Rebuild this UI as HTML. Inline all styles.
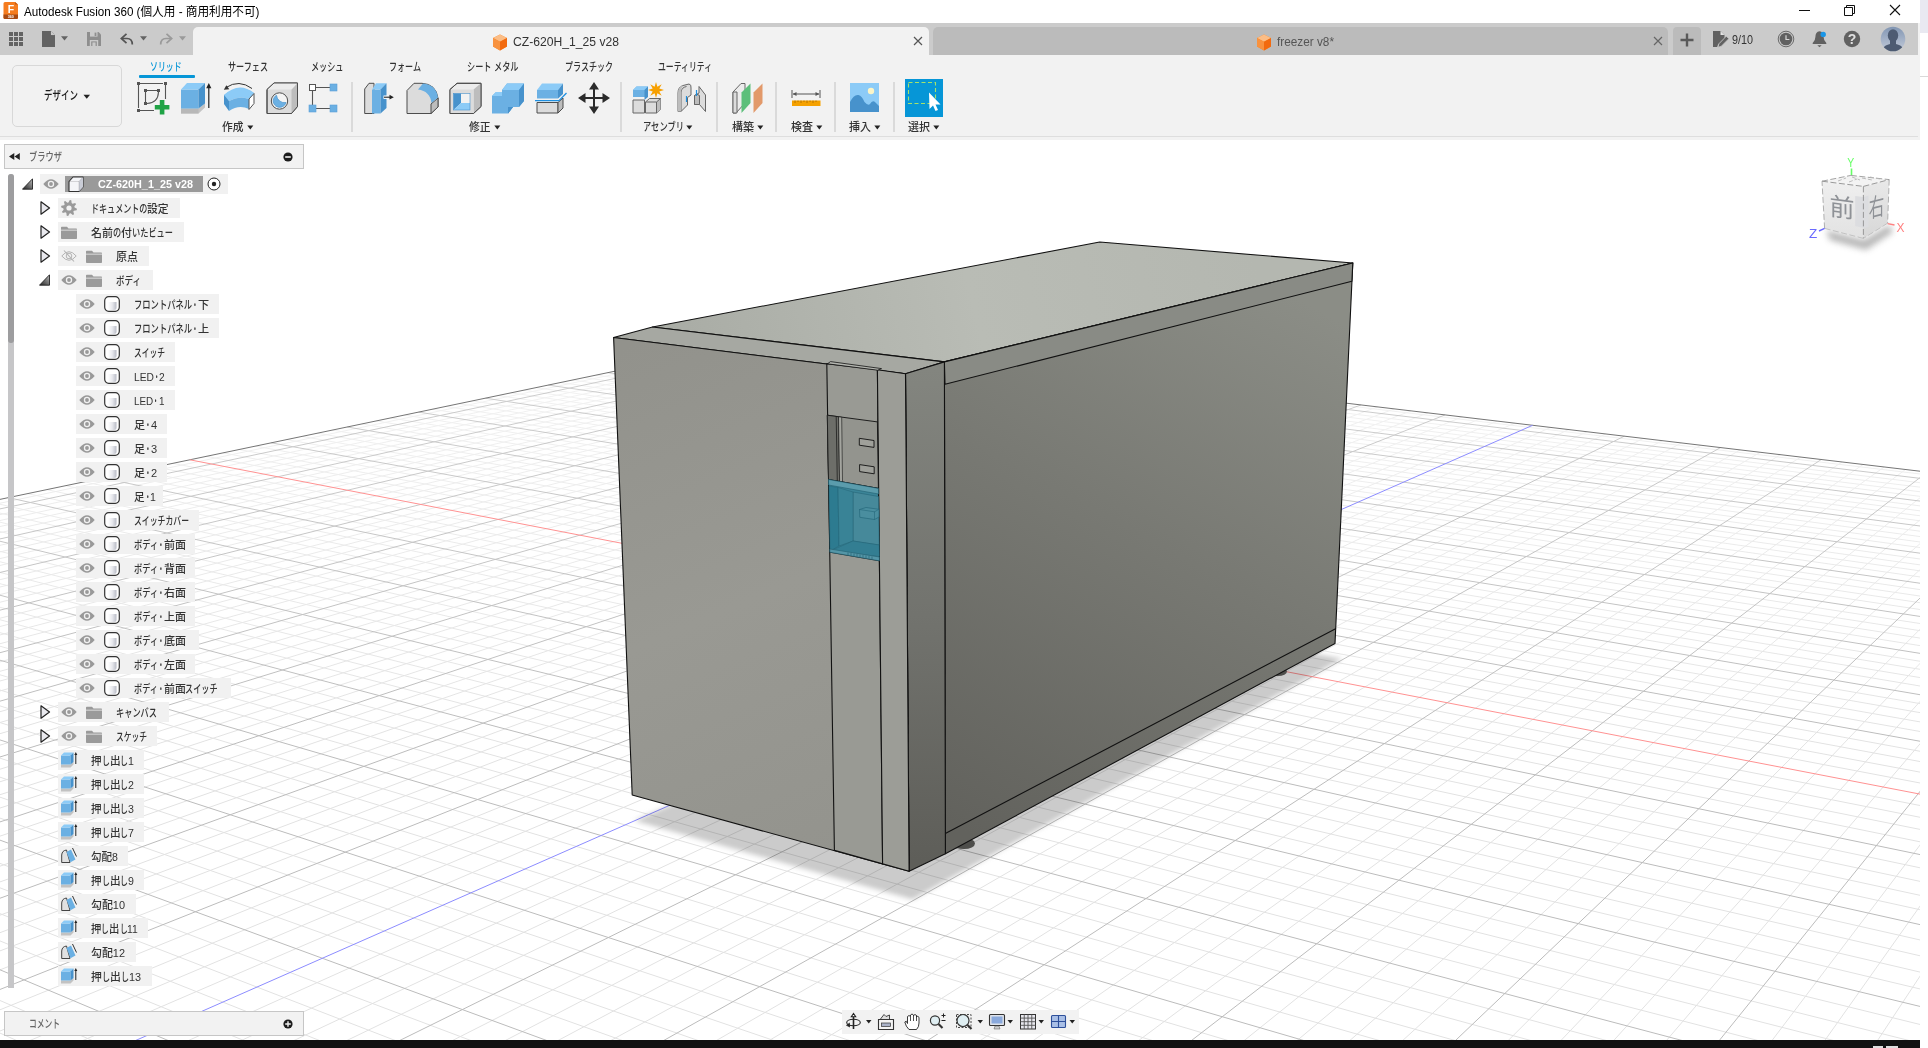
<!DOCTYPE html>
<html lang="ja"><head><meta charset="utf-8"><title>Autodesk Fusion 360</title><style>
html,body{margin:0;padding:0}
body{width:1928px;height:1048px;overflow:hidden;background:#fff;position:relative;font-family:"Liberation Sans","Noto Sans CJK JP",sans-serif;font-size:12px;color:#333}
.abs{position:absolute;display:block}
.t{position:absolute;white-space:pre;transform-origin:0 50%;line-height:18px;height:18px;display:inline-block}
.r{display:inline-block;transform-origin:0 50%;white-space:pre}
</style></head>
<body>
<svg width="0" height="0" style="position:absolute;left:0;top:0"><defs><linearGradient id="bdg" x1="0" y1="0" x2="1" y2="0"><stop offset="0" stop-color="#fff"/><stop offset=".5" stop-color="#e8e9ee"/><stop offset="1" stop-color="#b9bcc6"/></linearGradient><linearGradient id="trg" x1="0" y1="1" x2="1" y2="0"><stop offset="0" stop-color="#222"/><stop offset="1" stop-color="#bbb"/></linearGradient></defs></svg>
<div class="abs" style="left:0px;top:0px;width:1920px;height:23px;background:#fff;"></div>
<div class="abs" style="left:1920px;top:0px;width:8px;height:33px;background:#e9e9f1;"></div>
<div class="abs" style="left:1920px;top:76px;width:8px;height:1px;background:#d9d9d9;"></div>
<svg class="abs" style="left:3px;top:2px;" width="16" height="18" viewBox="0 0 16 18" ><path d="M2 0H12L15 2.5V15.5Q15 17 13.5 17H2Q.5 17 .5 15.5V1.5Q.5 0 2 0Z" fill="#f57c1f"/><path d="M.5 12.5H15V15.5Q15 17 13.5 17H2Q.5 17 .5 15.5Z" fill="#a84a12"/><path d="M12 0L15 2.5H12Z" fill="#c25a12"/><text x="8" y="11" font-size="10.5" font-family="Liberation Sans,sans-serif" font-weight="700" fill="#fff" text-anchor="middle">F</text><text x="7.8" y="16" font-size="3.6" font-family="Liberation Sans,sans-serif" font-weight="700" fill="#fff" text-anchor="middle">360</text></svg>
<span class="t" style="left:23.5px;top:2.5px;font-size:12.5px;font-weight:400;color:#000;transform:scaleX(0.9313)">Autodesk Fusion 360 (個人用 - 商用利用不可)</span>
<svg class="abs" style="left:1730px;top:0px;" width="190" height="23" viewBox="0 0 190 23" ><path d="M69 10.5H80" stroke="#111" stroke-width="1"/><path d="M114.500 7.500H122.500V15.500H114.500Z M116.500 7.500V5.500H124.500V13.500H122.500" fill="none" stroke="#111" stroke-width="1"/><path d="M160 5L170 15M170 5L160 15" stroke="#111" stroke-width="1.100"/></svg>
<div class="abs" style="left:0px;top:23px;width:1918px;height:32px;background:#cbcbcb;"></div>
<div class="abs" style="left:1918px;top:23px;width:2px;height:32px;background:#f2f2f2;"></div>
<div class="abs" style="left:193px;top:27px;width:736px;height:28px;background:#f2f2f2;border-radius:5px 5px 0 0"></div>
<div class="abs" style="left:933px;top:27px;width:735px;height:28px;background:#bbbbbb;border-radius:5px 5px 0 0"></div>
<div class="abs" style="left:1673px;top:27px;width:28px;height:28px;background:#bbbbbb;border-radius:4px 4px 0 0"></div>
<svg class="abs" style="left:0px;top:0px;" width="200" height="55" viewBox="0 0 200 55" ><g fill="#636363"><rect x="9" y="32" width="4" height="4"/><rect x="9" y="37" width="4" height="4"/><rect x="9" y="42" width="4" height="4"/><rect x="14" y="32" width="4" height="4"/><rect x="14" y="37" width="4" height="4"/><rect x="14" y="42" width="4" height="4"/><rect x="19" y="32" width="4" height="4"/><rect x="19" y="37" width="4" height="4"/><rect x="19" y="42" width="4" height="4"/></g><path d="M42 31H51L55 35V47H42Z" fill="#636363"/><path d="M51 31L55 35H51Z" fill="#cbcbcb"/><path d="M51.4 31.4V34.6H54.6" fill="none" stroke="#cbcbcb" stroke-width=".8"/><path d="M61 36.3H68L64.5 40.6Z" fill="#636363"/><path d="M87 32H98.5L101 34.5V46H87Z" fill="#8e8e8e"/><rect x="90" y="32" width="7.5" height="4.6" fill="#cbcbcb"/><rect x="94.6" y="32.6" width="1.8" height="3.4" fill="#8e8e8e"/><rect x="89.8" y="40" width="8.4" height="6" fill="#cbcbcb"/><rect x="91.2" y="41.4" width="5.6" height="4.6" fill="#8e8e8e"/><rect x="92.4" y="42.4" width="3.2" height="3.6" fill="#cbcbcb"/><path d="M121.5 38.5H127Q132.3 38.5 132.3 44.5" fill="none" stroke="#555" stroke-width="1.7"/><path d="M126.5 33.8L121.3 38.5L126.5 43.2" fill="none" stroke="#555" stroke-width="1.7"/><path d="M140 36.3H147L143.5 40.6Z" fill="#636363"/><path d="M171.5 38.5H166Q160.7 38.5 160.7 44.5" fill="none" stroke="#9a9a9a" stroke-width="1.7"/><path d="M166.5 33.8L171.7 38.5L166.5 43.2" fill="none" stroke="#9a9a9a" stroke-width="1.7"/><path d="M179 36.3H186L182.5 40.6Z" fill="#9a9a9a"/></svg>
<svg class="abs" style="left:492px;top:33.5px;" width="16" height="17" viewBox="0 0 16 17" ><path d="M8 .5L15 4V12.5L8 16.5L1 12.5V4Z" fill="#f58220"/><path d="M8 .5L15 4L8 7.8L1 4Z" fill="#fbbd86"/><path d="M8 7.8L15 4V12.5L8 16.5Z" fill="#f26a0f"/><path d="M8 7.8V16.5L1 12.5V4Z" fill="#f8923f"/></svg>
<span class="t" style="left:512.5px;top:32.5px;font-size:12.5px;font-weight:500;color:#333;transform:scaleX(0.9715)">CZ-620H_1_25 v28</span>
<svg class="abs" style="left:913px;top:36px;" width="10" height="10" viewBox="0 0 10 10" ><path d="M1 1L9 9M9 1L1 9" stroke="#555" stroke-width="1.2"/></svg>
<svg class="abs" style="left:1256px;top:33.5px;" width="16" height="17" viewBox="0 0 16 17" ><path d="M8 .5L15 4V12.5L8 16.5L1 12.5V4Z" fill="#f58220"/><path d="M8 .5L15 4L8 7.8L1 4Z" fill="#fbbd86"/><path d="M8 7.8L15 4V12.5L8 16.5Z" fill="#f26a0f"/><path d="M8 7.8V16.5L1 12.5V4Z" fill="#f8923f"/></svg>
<span class="t" style="left:1277px;top:32.5px;font-size:12.5px;font-weight:500;color:#555;transform:scaleX(0.9429)">freezer v8*</span>
<svg class="abs" style="left:1653px;top:36px;" width="10" height="10" viewBox="0 0 10 10" ><path d="M1 1L9 9M9 1L1 9" stroke="#666" stroke-width="1.2"/></svg>
<svg class="abs" style="left:1680px;top:33px;" width="14" height="14" viewBox="0 0 14 14" ><path d="M7 0.5V13.5M0.5 7H13.5" stroke="#5a5a5a" stroke-width="2.4"/></svg>
<svg class="abs" style="left:1712px;top:30px;" width="18" height="18" viewBox="0 0 18 18" ><path d="M1 1H8.500L12.500 5V8L6 14.500L5.200 17H1Z" fill="#616161"/><path d="M8.500 1V5H12.500Z" fill="#e4e4e4"/><path d="M14.300 6.200L16.800 8.700L9.300 16.200L6.200 17.200L6.900 13.800Z" fill="#616161" stroke="#cbcbcb" stroke-width=".7"/></svg>
<span class="t" style="left:1732px;top:30.5px;font-size:12px;font-weight:400;color:#333;transform:scaleX(0.8990)">9/10</span>
<svg class="abs" style="left:1776px;top:29px;" width="20" height="20" viewBox="0 0 20 20" ><circle cx="10" cy="10" r="7.800" fill="none" stroke="#616161" stroke-width=".9"/><circle cx="10" cy="10" r="6.300" fill="#616161"/><path d="M10 6.200V10.500H13.400" fill="none" stroke="#d8d8d8" stroke-width="1.200"/></svg>
<svg class="abs" style="left:1810px;top:29px;" width="20" height="20" viewBox="0 0 20 20" ><path d="M9.500 2.300Q13.600 2.800 13.600 8Q13.600 11.500 16.300 14V15H2.700V14Q5.400 11.500 5.400 8Q5.400 2.800 9.500 2.300Z" fill="#616161"/><path d="M7.300 16.200H11.700L9.500 18.300Z" fill="#616161"/><circle cx="13.200" cy="5.400" r="2.700" fill="#1a96e8"/></svg>
<svg class="abs" style="left:1842px;top:29px;" width="20" height="20" viewBox="0 0 20 20" ><circle cx="10" cy="10" r="8.200" fill="#616161"/><text x="10" y="15" font-size="14" font-weight="700" text-anchor="middle" fill="#e0e0e0" font-family="Liberation Sans,sans-serif">?</text></svg>
<svg class="abs" style="left:1880px;top:26px;" width="26" height="26" viewBox="0 0 26 26" ><defs><clipPath id="avc"><circle cx="13" cy="13" r="12.300"/></clipPath><linearGradient id="avg" x1="0" y1="0" x2="0" y2="1"><stop offset="0" stop-color="#8296b3"/><stop offset="1" stop-color="#c3cbd9"/></linearGradient></defs><circle cx="13" cy="13" r="12.300" fill="url(#avg)"/><g clip-path="url(#avc)" fill="#4d5b72"><ellipse cx="13" cy="9.500" rx="5.200" ry="6.300"/><path d="M10 14H16V18Q21 19 23 22V27H3V22Q5 19 10 18Z"/></g></svg>
<div class="abs" style="left:0px;top:55px;width:1920px;height:85px;background:#f2f2f2;"></div>
<div class="abs" style="left:0px;top:136px;width:1918px;height:1px;background:#dedede;"></div>
<div class="abs" style="left:11.5px;top:65px;width:108px;height:60px;border:1.5px solid #d8d8d8;border-radius:5px;box-sizing:content-box"></div>
<span class="t" style="left:44px;top:86.5px;font-size:12px;font-weight:500;color:#1a1a1a;transform:scaleX(0.7081)">デザイン</span>
<svg class="abs" style="left:82.5px;top:93.5px;" width="8" height="6" viewBox="0 0 8 6" ><path d="M.5 .8H7L3.75 4.8Z" fill="#222"/></svg>
<span class="t" style="left:149.5px;top:58px;font-size:11.5px;font-weight:500;color:#0696d7;transform:scaleX(0.6848)">ソリッド</span>
<span class="t" style="left:227.5px;top:58px;font-size:11.5px;font-weight:500;color:#333;transform:scaleX(0.7041)">サーフェス</span>
<span class="t" style="left:310.5px;top:58px;font-size:11.5px;font-weight:500;color:#333;transform:scaleX(0.7065)">メッシュ</span>
<span class="t" style="left:389px;top:58px;font-size:11.5px;font-weight:500;color:#333;transform:scaleX(0.7009)">フォーム</span>
<span class="t" style="left:466.5px;top:58px;font-size:11.5px;font-weight:500;color:#333"><span class="r" style="transform:scaleX(0.7096);margin-right:-10.02px">シート</span><span class="r" style="transform:scaleX(0.9494);margin-right:-0.16px"> </span><span class="r" style="transform:scaleX(0.7096);margin-right:-10.02px">メタル</span></span>
<span class="t" style="left:564.5px;top:58px;font-size:11.5px;font-weight:500;color:#333;transform:scaleX(0.6979)">プラスチック</span>
<span class="t" style="left:658px;top:58px;font-size:11.5px;font-weight:500;color:#333;transform:scaleX(0.6825)">ユーティリティ</span>
<div class="abs" style="left:138.5px;top:75px;width:56px;height:3px;background:#0696d7;border-radius:1px"></div>
<div class="abs" style="left:350.5px;top:82px;width:2px;height:50px;background:#dadada;"></div>
<div class="abs" style="left:619.5px;top:82px;width:2px;height:50px;background:#dadada;"></div>
<div class="abs" style="left:716.0px;top:82px;width:2px;height:50px;background:#dadada;"></div>
<div class="abs" style="left:775.0px;top:82px;width:2px;height:50px;background:#dadada;"></div>
<div class="abs" style="left:834.0px;top:82px;width:2px;height:50px;background:#dadada;"></div>
<div class="abs" style="left:893.0px;top:82px;width:2px;height:50px;background:#dadada;"></div>
<svg class="abs" style="left:137px;top:82px;overflow:visible" width="32" height="32" viewBox="0 0 32 32" ><g fill="none" stroke="#555" stroke-width="1.1"><path d="M3 1.5H26M1.5 3V26M28.5 3V17M3 28.5H17"/><path d="M9 8.5H20M8.5 9V20M21.5 10Q21 21 10 21.5"/></g><g fill="#555"><rect x="0" y="0" width="3" height="3"/><rect x="27" y="0" width="3" height="3"/><rect x="0" y="27" width="3" height="3"/><rect x="7" y="7" width="3" height="3"/><rect x="20" y="7" width="3" height="3"/><rect x="7" y="20" width="3" height="3"/></g><path d="M22.8 18h4.6v5h5v4.6h-5v5h-4.6v-5h-5v-4.6h5z" fill="#1fa345"/></svg>
<svg class="abs" style="left:181px;top:82px;overflow:visible" width="32" height="32" viewBox="0 0 32 32" ><path d="M0 26.5L17.5 26.5L24 21.5V25.5L17.5 31.5H0Z" fill="#c4c4c4"/><path d="M0 26.5H17.5V31.5H0Z" fill="#b8b8b8"/><path d="M0 7.5H17.5V26.5H0Z" fill="#6bb0e3"/><path d="M0 7.5L6 1H24L17.5 7.5Z" fill="#8ccbf7"/><path d="M17.5 7.5L24 1V21.5L17.5 26.5Z" fill="#4792cc"/><path d="M27.8 26V5" stroke="#222" stroke-width="1.2" fill="none"/><path d="M27.8 1L25.2 6.2H30.4Z" fill="#222"/></svg>
<svg class="abs" style="left:222.5px;top:83px;overflow:visible" width="32" height="30" viewBox="0 0 32 30" ><path d="M1 12Q16 -2 31 10V18Q16 6 1 20Z" fill="#8ccbf7"/><path d="M1 12Q9 6 16 5.5Q24 5 31 10L26 16Q16 12 6 18Z" fill="#8ccbf7"/><path d="M6 18Q16 12 26 16V26Q16 21 6 28Z" fill="#6bb0e3"/><path d="M1 12L6 18V28L1 21Z" fill="#4792cc"/><path d="M26 16L31 10.5V20.5L26 26.5Z" fill="#fff" stroke="#555" stroke-width="1"/><path d="M3 4.5Q16 -4 29 5.5" stroke="#333" stroke-width="1" fill="none"/><path d="M0.8 6.8L6.3 6.2L3.4 2.2Z" fill="#333"/></svg>
<svg class="abs" style="left:265.5px;top:82px;overflow:visible" width="32" height="32" viewBox="0 0 32 32" ><path d="M1 7.5L8 1H31.5V24.5L25.5 31.5H1Z" fill="#dcdcdc" stroke="#4d4d4d" stroke-width="1" stroke-linejoin="round"/><path d="M25.5 7.5L31.5 1V24.5L25.5 31.5Z" fill="#bdbdbd"/><path d="M1 7.5L8 1H31.5L25.5 7.5Z" fill="#ececec"/><path d="M1 7.5L8 1H31.5V24.5L25.5 31.5H1Z" fill="none" stroke="#4d4d4d" stroke-width="1" stroke-linejoin="round"/><circle cx="13.5" cy="19" r="8.2" fill="#f4f4f4" stroke="#4d4d4d" stroke-width="1"/><path d="M10.5 13.2A6.5 6.5 0 1 0 20 20.5A8 8 0 0 1 10.5 13.2Z" fill="#6bb0e3" stroke="#4792cc" stroke-width=".7"/></svg>
<svg class="abs" style="left:309px;top:84px;overflow:visible" width="28" height="28" viewBox="0 0 28 28" ><path d="M3.5 6V24M6 3.5H22M6 24.5H22" stroke="#555" stroke-width="1.1" fill="none"/><rect x=".5" y=".5" width="6" height="6" fill="#fff" stroke="#555" stroke-width="1"/><rect x="21" y="0" width="7" height="7" fill="#6bb0e3" stroke="#5a9fd6" stroke-width=".6"/><rect x="0" y="21" width="7" height="7" fill="#6bb0e3" stroke="#5a9fd6" stroke-width=".6"/><rect x="21" y="21" width="7" height="7" fill="#6bb0e3" stroke="#5a9fd6" stroke-width=".6"/></svg>
<svg class="abs" style="left:363.5px;top:82px;overflow:visible" width="32" height="32" viewBox="0 0 32 32" ><path d="M.7 7L5 1.3H10V31.5H.7Z" fill="#dcdcdc" stroke="#4d4d4d" stroke-width="1" stroke-linejoin="round"/><path d="M8 7.5H16.5V31.5H8Z" fill="#6bb0e3"/><path d="M8 7.5L12 1.3H22.5L16.5 7.5Z" fill="#8ccbf7"/><path d="M16.5 7.5L22.5 1.3V26L16.5 31.5Z" fill="#4792cc"/><rect x="19.5" y="13.5" width="4" height="3.4" fill="#fff"/><path d="M20 15.2H27" stroke="#222" stroke-width="1.1"/><path d="M29.8 15.2L25.5 12.8V17.6Z" fill="#222"/></svg>
<svg class="abs" style="left:405.5px;top:82px;overflow:visible" width="33" height="32" viewBox="0 0 33 32" ><path d="M1 8.5L8 1.3H16Q30 2 32 16V25L25 31.5H1Z" fill="#dcdcdc" stroke="#4d4d4d" stroke-width="1" stroke-linejoin="round"/><path d="M25 31.5V22L32 16V25Z" fill="#bdbdbd" stroke="#4d4d4d" stroke-width="1" stroke-linejoin="round"/><path d="M12 7.5L17 1.5Q30 2.5 32 15.5L25.5 21Q24 9 12 7.5Z" fill="#6bb0e3"/></svg>
<svg class="abs" style="left:448.5px;top:82px;overflow:visible" width="33" height="32" viewBox="0 0 33 32" ><path d="M1 7.5L8 1.3H32V24.5L24.5 31.5H1Z" fill="#ececec" stroke="#4d4d4d" stroke-width="1" stroke-linejoin="round"/><path d="M24.5 7.5L32 1.3V24.5L24.5 31.5Z" fill="#bdbdbd"/><path d="M1 7.5H24.5V31.5H1Z" fill="#dcdcdc"/><path d="M1 7.5L8 1.3H32V24.5L24.5 31.5H1Z" fill="none" stroke="#4d4d4d" stroke-width="1" stroke-linejoin="round"/><rect x="4.5" y="11.5" width="16.5" height="16.5" fill="#f2f2f2"/><path d="M4.5 11.5H12V21L4.5 28Z" fill="#4792cc"/><path d="M4.5 28L12 21H21V28Z" fill="#8ccbf7"/><rect x="4.5" y="11.5" width="16.5" height="16.5" fill="none" stroke="#4792cc" stroke-width=".6"/></svg>
<svg class="abs" style="left:491.5px;top:82px;overflow:visible" width="32" height="32" viewBox="0 0 32 32" ><path d="M10 8L15 1.5H32V19L27 25H21L16 31.5H0V14L4 10H10Z" fill="#6bb0e3"/><path d="M10 8L15 1.5H32L27 8Z" fill="#8ccbf7"/><path d="M0 14L4 10H10V14Z" fill="#8ccbf7"/><path d="M27 8L32 1.5V19L27 25Z" fill="#4792cc"/><path d="M21 25H16V31.5L21 25Z" fill="#4792cc"/><path d="M16 25H21L16 31.5Z" fill="#4792cc"/></svg>
<svg class="abs" style="left:535px;top:82px;overflow:visible" width="32" height="32" viewBox="0 0 32 32" ><path d="M2 8L7 1.5H28L23 8Z" fill="#8ccbf7"/><path d="M2 8H23V16.5H2Z" fill="#6bb0e3"/><path d="M23 8L28 1.5V12L23 16.5Z" fill="#4792cc"/><path d="M2 20.5H23V31H2Z" fill="#dcdcdc" stroke="#4d4d4d" stroke-width="1"/><path d="M23 20.5L28 16V26L23 31Z" fill="#bdbdbd" stroke="#4d4d4d" stroke-width="1" stroke-linejoin="round"/><path d="M0 18.7H24L31.5 11" stroke="#1e8fe0" stroke-width="1.3" fill="none"/></svg>
<svg class="abs" style="left:578px;top:82px;overflow:visible" width="32" height="32" viewBox="0 0 32 32" ><path d="M16 3V29M3 16H29" stroke="#2b2b2b" stroke-width="2"/><path d="M16 0L11 7.5H21ZM16 32L11 24.5H21ZM0 16L7.5 11V21ZM32 16L24.5 11V21Z" fill="#2b2b2b"/></svg>
<svg class="abs" style="left:631.5px;top:82px;overflow:visible" width="32" height="32" viewBox="0 0 32 32" ><path d="M1 8L4.5 4.5H16V15H1Z" fill="#6bb0e3"/><path d="M1 8L4.5 4.5H16L12.5 8Z" fill="#8ccbf7"/><path d="M12.5 8L16 4.5V15L12.5 18Z" fill="#4792cc"/><path d="M1 18H12.5V31H1Z" fill="#dcdcdc" stroke="#666" stroke-width="1"/><path d="M13.5 20L17.5 16.5H28.5V27.5L24.5 31H13.5Z" fill="#dcdcdc" stroke="#666" stroke-width="1" stroke-linejoin="round"/><path d="M24.5 20L28.5 16.5V27.5L24.5 31Z" fill="#bdbdbd"/><path d="M13.5 20H24.5V31M24.5 20L28.5 16.5" fill="none" stroke="#666" stroke-width="1"/><path d="M24.0 0.0L25.4 4.7L29.7 2.3L27.3 6.6L32.0 8.0L27.3 9.4L29.7 13.7L25.4 11.3L24.0 16.0L22.6 11.3L18.3 13.7L20.7 9.4L16.0 8.0L20.7 6.6L18.3 2.3L22.6 4.7Z" fill="#f7a000"/></svg>
<svg class="abs" style="left:676.5px;top:83px;overflow:visible" width="29" height="29" viewBox="0 0 29 29" ><path d="M1 10Q1 4 6 2.5L12 1Q14.5 1.5 14 5V12L10.5 14.5V22L4 28.5H1Z" fill="#dcdcdc" stroke="#666" stroke-width="1" stroke-linejoin="round"/><path d="M4 28.5V9Q4.5 4.5 9.5 3.5" fill="none" stroke="#666" stroke-width="1"/><path d="M1 10Q1 4 6 2.5Q4 5 4 9V28.5H1Z" fill="#bdbdbd"/><path d="M22 3.5L28.5 12V28.5L22.5 21.5H17.5V12.5L22 10Z" fill="#dcdcdc" stroke="#666" stroke-width="1" stroke-linejoin="round"/><path d="M17.5 12.5Q20 10 22.5 12.5V21.5H17.5Z" fill="#bdbdbd" stroke="#666" stroke-width="1"/><path d="M9.5 13V19M19.5 7V13" stroke="#1e8fe0" stroke-width="1.2"/></svg>
<svg class="abs" style="left:731.5px;top:82px;overflow:visible" width="31" height="32" viewBox="0 0 31 32" ><path d="M1 10L9 1.5H13V21L4 31H1Z" fill="#ececec" stroke="#666" stroke-width="1" stroke-linejoin="round"/><path d="M1 10H5V31H1Z" fill="#dcdcdc" stroke="#666" stroke-width="1"/><path d="M9.5 10.5L18.5 1.5V21L9.5 31Z" fill="#5cbf7a"/><path d="M21.5 10.5L30.5 1.5V21L21.5 31Z" fill="#e2996a"/></svg>
<svg class="abs" style="left:791.5px;top:90px;overflow:visible" width="29" height="16" viewBox="0 0 29 16" ><path d="M0 0V8M28 0V8M1 4H27" stroke="#555" stroke-width="1" fill="none"/><path d="M0.8 4L4.5 2V6ZM27.2 4L23.5 2V6Z" fill="#555"/><rect x="0" y="10.5" width="28.5" height="5.5" fill="#f5a100"/><path d="M3 10.5V13M6 10.5V12M9 10.5V13M12 10.5V12M15 10.5V13M18 10.5V12M21 10.5V13M24 10.5V12" stroke="#a86a00" stroke-width=".8"/></svg>
<svg class="abs" style="left:850px;top:83px;overflow:visible" width="29" height="29" viewBox="0 0 29 29" ><rect x="0" y="0" width="29" height="29" fill="#8ccbf7"/><path d="M0 19Q4 11 8.5 12Q12 13 14.5 19Q18 23 20 21Q22.5 16.5 25.5 19.5L29 23V29H0Z" fill="#4792cc"/><circle cx="21" cy="8" r="3.2" fill="#fbf5c8"/></svg>
<svg class="abs" style="left:905px;top:79px;overflow:visible" width="38" height="38" viewBox="0 0 38 38" ><rect width="38" height="38" fill="#0696d7"/><rect x="3.5" y="3.5" width="27" height="21" fill="none" stroke="#a6e36a" stroke-width="1.1" stroke-dasharray="4 2.5"/><path d="M24 13.5L24.5 30L28 26.5L30.5 32L33 31L30.5 25.5H35.5Z" fill="#fff"/></svg>
<span class="t" style="left:221.5px;top:118px;font-size:11.5px;font-weight:500;color:#333;transform:scaleX(0.9348)">作成</span>
<svg class="abs" style="left:246.5px;top:125px;" width="7" height="5" viewBox="0 0 7 5" ><path d="M.3 .5H6.3L3.3 4.5Z" fill="#222"/></svg>
<span class="t" style="left:468.5px;top:118px;font-size:11.5px;font-weight:500;color:#333;transform:scaleX(0.9348)">修正</span>
<svg class="abs" style="left:493.5px;top:125px;" width="7" height="5" viewBox="0 0 7 5" ><path d="M.3 .5H6.3L3.3 4.5Z" fill="#222"/></svg>
<span class="t" style="left:642.5px;top:118px;font-size:11.5px;font-weight:500;color:#333;transform:scaleX(0.7201)">アセンブリ</span>
<svg class="abs" style="left:686px;top:125px;" width="7" height="5" viewBox="0 0 7 5" ><path d="M.3 .5H6.3L3.3 4.5Z" fill="#222"/></svg>
<span class="t" style="left:732px;top:118px;font-size:11.5px;font-weight:500;color:#333;transform:scaleX(0.9565)">構築</span>
<svg class="abs" style="left:757px;top:125px;" width="7" height="5" viewBox="0 0 7 5" ><path d="M.3 .5H6.3L3.3 4.5Z" fill="#222"/></svg>
<span class="t" style="left:790.5px;top:118px;font-size:11.5px;font-weight:500;color:#333;transform:scaleX(0.9565)">検査</span>
<svg class="abs" style="left:815.5px;top:125px;" width="7" height="5" viewBox="0 0 7 5" ><path d="M.3 .5H6.3L3.3 4.5Z" fill="#222"/></svg>
<span class="t" style="left:849px;top:118px;font-size:11.5px;font-weight:500;color:#333;transform:scaleX(0.9565)">挿入</span>
<svg class="abs" style="left:874px;top:125px;" width="7" height="5" viewBox="0 0 7 5" ><path d="M.3 .5H6.3L3.3 4.5Z" fill="#222"/></svg>
<span class="t" style="left:908px;top:118px;font-size:11.5px;font-weight:500;color:#333;transform:scaleX(0.9565)">選択</span>
<svg class="abs" style="left:932.5px;top:125px;" width="7" height="5" viewBox="0 0 7 5" ><path d="M.3 .5H6.3L3.3 4.5Z" fill="#222"/></svg>
<div class="abs" style="left:0;top:140px;width:1920px;height:900px;overflow:hidden;background:#fff"><svg style="position:absolute;left:0;top:0" width="1920" height="900" viewBox="0 140 1920 900"><defs><linearGradient id="fade" gradientUnits="userSpaceOnUse" x1="0" y1="330" x2="0" y2="760"><stop offset="0" stop-color="#606060"/><stop offset="1" stop-color="#fff"/></linearGradient><linearGradient id="fade2" gradientUnits="userSpaceOnUse" x1="0" y1="330" x2="0" y2="760"><stop offset="0" stop-color="#b0b0b0"/><stop offset="1" stop-color="#fff"/></linearGradient><mask id="mk1" maskUnits="userSpaceOnUse" x="0" y="140" width="1920" height="900"><rect x="0" y="140" width="1920" height="900" fill="url(#fade)"/></mask><mask id="mk2" maskUnits="userSpaceOnUse" x="0" y="140" width="1920" height="900"><rect x="0" y="140" width="1920" height="900" fill="url(#fade2)"/></mask></defs>
<path d="M790.5 337.3L-912.2 694.7M814.3 340.1L-890.4 705.5M826.3 341.5L-879.2 711.0M838.4 343.0L-867.9 716.5M850.6 344.4L-856.4 722.2M875.3 347.3L-833.0 733.8M887.8 348.8L-821.0 739.7M900.4 350.3L-808.8 745.7M913.1 351.8L-796.4 751.8M938.8 354.9L-771.1 764.3M951.8 356.4L-758.1 770.7M964.8 358.0L-744.9 777.2M978.0 359.5L-731.5 783.8M1004.7 362.7L-704.1 797.3M1018.2 364.3L-690.1 804.2M1031.8 365.9L-675.8 811.2M1045.5 367.5L-661.2 818.4M1073.3 370.8L-631.4 833.1M1087.3 372.5L-616.1 840.6M1101.5 374.2L-600.6 848.3M1115.8 375.9L-584.8 856.1M1144.7 379.3L-552.3 872.1M1159.3 381.0L-535.6 880.3M1174.1 382.8L-518.6 888.7M1188.9 384.5L-501.3 897.2M1219.1 388.1L-465.7 914.8M1234.3 389.9L-447.4 923.8M1249.7 391.7L-428.8 933.0M1265.2 393.6L-409.8 942.3M1296.6 397.3L-370.7 961.6M1312.6 399.2L-350.5 971.5M1328.6 401.1L-330.0 981.7M1344.8 403.0L-309.1 992.0M1377.6 406.9L-265.9 1013.3M1394.2 408.9L-243.6 1024.2M1411.0 410.9L-220.8 1035.4M1427.9 412.9L-197.6 1046.9M1462.2 416.9L-149.7 1070.5M1479.6 419.0L-124.9 1082.7M1497.1 421.1L-99.6 1095.2M1514.8 423.2L-73.7 1108.0M1550.6 427.4L-20.1 1134.4M1568.8 429.6L7.6 1148.0M1587.1 431.7L35.9 1162.0M1605.7 433.9L65.0 1176.3M1643.2 438.4L125.2 1206.0M1662.3 440.7L156.4 1221.4M1681.5 442.9L188.4 1237.1M1700.9 445.2L221.2 1253.3M1740.2 449.9L289.3 1286.9M1760.2 452.3L324.7 1304.3M1780.4 454.7L361.1 1322.3M1800.7 457.1L398.4 1340.7M1842.0 462.0L476.2 1379.0M1863.0 464.5L516.8 1399.0M1884.1 467.0L558.4 1419.5M1905.5 469.5L601.3 1440.7M1948.9 474.6L691.0 1484.8M1971.0 477.3L737.8 1507.9M1993.2 479.9L786.1 1531.7M2015.7 482.6L835.9 1556.3M2061.4 488.0L940.3 1607.7M2084.5 490.7L995.1 1634.7M2108.0 493.5L1051.6 1662.6M2131.6 496.3L1110.1 1691.4M2179.7 502.0L1233.3 1752.1M2204.2 504.9L1298.1 1784.1M2228.9 507.8L1365.3 1817.2M2253.8 510.8L1435.0 1851.5M2304.6 516.8L1582.4 1924.2M2330.3 519.9L1660.5 1962.6M2356.4 523.0L1741.6 2002.6M2382.8 526.1L1826.1 2044.3M2436.4 532.4L2005.7 2132.8M2463.6 535.7L2101.4 2179.9M2491.2 538.9L2201.3 2229.2M2519.1 542.3L2305.7 2280.7M776.0 337.6L2547.0 548.7M756.5 341.7L2546.3 558.6M746.6 343.7L2545.9 563.7M736.6 345.8L2545.5 568.9M726.5 347.9L2545.1 574.1M706.0 352.2L2544.3 584.9M695.5 354.4L2543.9 590.5M685.0 356.6L2543.5 596.1M674.3 358.8L2543.1 601.8M652.5 363.3L2542.2 613.6M641.5 365.6L2541.8 619.7M630.3 368.0L2541.3 625.8M619.0 370.3L2540.9 632.1M596.0 375.1L2539.9 645.1M584.3 377.6L2539.4 651.7M572.4 380.0L2538.9 658.5M560.5 382.5L2538.4 665.4M536.1 387.6L2537.3 679.7M523.6 390.2L2536.8 687.0M511.1 392.8L2536.2 694.5M498.3 395.5L2535.7 702.2M472.4 400.9L2534.5 718.0M459.2 403.6L2533.9 726.1M445.8 406.4L2533.3 734.5M432.3 409.2L2532.7 743.0M404.7 415.0L2531.4 760.6M390.6 417.9L2530.7 769.7M376.4 420.9L2530.0 779.0M361.9 423.9L2529.3 788.5M332.5 430.1L2527.8 808.3M317.5 433.2L2527.1 818.5M302.3 436.4L2526.3 828.9M286.8 439.6L2525.5 839.7M255.4 446.1L2523.9 862.0M239.3 449.5L2523.0 873.5M223.0 452.9L2522.1 885.4M206.5 456.3L2521.2 897.6M172.8 463.3L2519.4 922.9M155.5 466.9L2518.4 936.1M138.1 470.6L2517.4 949.7M120.4 474.3L2516.4 963.6M84.1 481.8L2514.2 992.7M65.6 485.7L2513.1 1007.9M46.8 489.6L2511.9 1023.5M27.8 493.6L2510.7 1039.6M-11.3 501.7L2508.2 1073.4M-31.2 505.9L2506.9 1091.1M-51.5 510.1L2505.6 1109.3M-72.1 514.4L2504.2 1128.1M-114.2 523.2L2501.3 1167.7M-135.8 527.7L2499.7 1188.6M-157.7 532.2L2498.1 1210.1M-180.0 536.9L2496.5 1232.4M-225.6 546.4L2493.0 1279.6M-249.0 551.3L2491.2 1304.5M-272.8 556.2L2489.2 1330.3M-297.0 561.3L2487.3 1357.2M-346.6 571.6L2483.0 1414.2M-372.0 576.9L2480.8 1444.5M-397.9 582.3L2478.5 1476.0M-424.3 587.8L2476.0 1509.0M-478.4 599.1L2470.8 1579.4M-506.2 604.9L2468.0 1617.0M-534.6 610.8L2465.1 1656.4M-563.4 616.8L2462.1 1697.8M-622.7 629.2L2455.5 1786.9M-653.2 635.5L2451.9 1834.9M-684.2 642.0L2448.2 1885.6M-715.9 648.6L2444.2 1939.0M-781.1 662.2L2435.6 2055.4M-814.7 669.2L2430.9 2118.8M-849.0 676.3L2426.0 2186.2M-884.0 683.6L2420.7 2258.0" stroke="#e2e2e2" stroke-width="1" fill="none" mask="url(#mk1)"/>
<path d="M802.3 338.7L-901.3 700.1M862.9 345.9L-844.8 727.9M925.9 353.3L-783.8 758.0M991.3 361.1L-717.9 790.5M1059.4 369.2L-646.5 825.7M1130.2 377.6L-568.7 864.0M1203.9 386.3L-483.7 905.9M1280.9 395.4L-390.4 951.9M1361.1 404.9L-287.7 1002.5M1445.0 414.9L-173.9 1058.6M1624.3 436.2L94.7 1191.0M1720.5 447.6L254.8 1269.9M1821.3 459.5L436.8 1359.6M1927.1 472.1L645.5 1462.4M2038.4 485.3L887.3 1581.6M2155.6 499.2L1170.6 1721.2M2279.1 513.8L1507.3 1887.2M2409.4 529.3L1914.0 2087.6M2547.3 545.6L2415.0 2334.5M766.3 339.6L2546.7 553.7M716.3 350.0L2544.7 579.5M663.5 361.1L2542.7 607.7M607.6 372.7L2540.4 638.5M548.3 385.1L2537.9 672.5M485.5 398.2L2535.1 710.0M418.6 412.1L2532.0 751.7M347.3 427.0L2528.6 798.3M271.2 442.8L2524.7 850.7M102.4 478.0L2515.3 977.9M8.4 497.6L2509.5 1056.3M-93.0 518.7L2502.7 1147.6M-202.6 541.6L2494.8 1255.6M-321.6 566.4L2485.2 1385.1M-451.1 593.4L2473.5 1543.4M-592.8 622.9L2458.9 1741.2M-748.2 655.3L2440.1 1995.5M-919.6 691.1L2415.0 2334.5" stroke="#bcbcbc" stroke-width="1" fill="none" mask="url(#mk2)"/>
<path d="M-919.6 691.1L782.2 336.3L2547.3 545.6" stroke="#757575" stroke-width="1" fill="none"/>
<path d="M189.8 459.8L2520.3 910.1" stroke="#ff9292" stroke-width="1" fill="none"/>
<path d="M1532.6 425.3L-47.2 1121.0" stroke="#8c8cff" stroke-width="1" fill="none"/><defs><filter id="blur8" x="-20%" y="-20%" width="140%" height="140%"><feGaussianBlur stdDeviation="2.4"/></filter></defs><path d="M634.7 820.7L912.6 899.5L1342.2 658.8L1103.6 614.2Z" fill="#cbcbcb" filter="url(#blur8)" style="mix-blend-mode:multiply"/><defs>
<linearGradient id="gF" gradientUnits="userSpaceOnUse" x1="640" y1="340" x2="860" y2="860"><stop offset="0" stop-color="#92928c"/><stop offset=".5" stop-color="#999993"/><stop offset="1" stop-color="#93938d"/></linearGradient>
<linearGradient id="gT" gradientUnits="userSpaceOnUse" x1="700" y1="380" x2="1250" y2="240"><stop offset="0" stop-color="#aaada6"/><stop offset=".5" stop-color="#b9bcb5"/><stop offset="1" stop-color="#b4b7b0"/></linearGradient>
<linearGradient id="gR" gradientUnits="userSpaceOnUse" x1="1300" y1="300" x2="1000" y2="850"><stop offset="0" stop-color="#8b8d86"/><stop offset=".45" stop-color="#787973"/><stop offset="1" stop-color="#62625d"/></linearGradient>
<linearGradient id="gS" gradientUnits="userSpaceOnUse" x1="925" y1="370" x2="925" y2="860"><stop offset="0" stop-color="#83857f"/><stop offset=".5" stop-color="#72736e"/><stop offset="1" stop-color="#5e5e59"/></linearGradient>
<linearGradient id="gB" gradientUnits="userSpaceOnUse" x1="828" y1="480" x2="880" y2="560"><stop offset="0" stop-color="#2f8fa6"/><stop offset="1" stop-color="#4a8c9c"/></linearGradient>
<filter id="blur3" x="-20%" y="-20%" width="140%" height="140%"><feGaussianBlur stdDeviation="2.5"/></filter>
</defs>
<ellipse cx="964" cy="843.5" rx="11" ry="5.5" fill="#4e4e4b"/>
<ellipse cx="1278" cy="671.5" rx="9" ry="4.5" fill="#4e4e4b"/>
<path d="M652.5 327.0L1099.7 242.0L1352.8 263.0L944.4 361.9Z" fill="url(#gT)" stroke="#111" stroke-width="1.1" stroke-linejoin="round" />
<path d="M613.6 337.5L652.5 327.0L944.4 361.9L905.5 373.8Z" fill="#a6a8a2" stroke="#111" stroke-width="1.1" stroke-linejoin="round" />
<path d="M944.4 361.9L1352.8 263.0L1335.0 643.5L945.4 853.7Z" fill="url(#gR)" stroke="#111" stroke-width="1.1" stroke-linejoin="round" />
<path d="M944.4 361.9L1352.8 263.0L1351.9 281.2L945.0 384.3Z" fill="#898b85" stroke="#111" stroke-width="1.1" stroke-linejoin="round" />
<path d="M945.8 833.3L1335.6 628.7" fill="none" stroke="#111" stroke-width="1.1" stroke-linecap="round"/>
<path d="M905.5 373.8L944.4 361.9L945.4 853.7L909.1 871.3Z" fill="url(#gS)" stroke="#111" stroke-width="1.1" stroke-linejoin="round" />
<path d="M613.6 337.5L905.5 373.8L909.1 871.3L632.2 795.0Z" fill="url(#gF)" stroke="#111" stroke-width="1.1" stroke-linejoin="round" />
<path d="M826.8 363.6L877.4 369.8L882.6 863.9L834.4 850.4Z" fill="#999a94" stroke="#111" stroke-width="1.1" stroke-linejoin="round" />
<path d="M877.4 369.8L905.5 373.8L909.1 871.3L882.6 863.9Z" fill="#9c9d97" stroke="#111" stroke-width="1.1" stroke-linejoin="round" />
<path d="M827.5 363.8L830.5 361.6L881.5 368.6L877.6 370.2Z" fill="#b4b6b0" stroke="#111" stroke-width="0.8" stroke-linejoin="round" />
<path d="M827.3 415.2L877.4 421.9L878.4 488.4L828.5 479.5Z" fill="#93948e" stroke="#111" stroke-width="0.9" stroke-linejoin="round" />
<path d="M827.3 415.2L838.5 416.8L839.6 481.5L828.5 479.5Z" fill="#6d6e69" stroke="#111" stroke-width="0.7" stroke-linejoin="round" />
<path d="M836.2 416.5L837.3 481.0" fill="none" stroke="#111" stroke-width="0.7" stroke-linecap="round"/>
<path d="M838.5 416.8L841.7 417.2L842.5 482.0L839.6 481.5Z" fill="#a4a59f" stroke="#111" stroke-width="0.6" stroke-linejoin="round" />
<path d="M859.3 438.3L874.0 440.5L874.0 447.4L859.3 445.2Z" fill="#9fa09a" stroke="#111" stroke-width="0.9" stroke-linejoin="round" />
<path d="M859.6 464.6L874.2 466.8L874.2 473.8L859.6 471.6Z" fill="#9fa09a" stroke="#111" stroke-width="0.9" stroke-linejoin="round" />
<path d="M828.5 479.5L878.4 488.4L879.4 560.8L829.8 552.2Z" fill="#3b8497" stroke="#111" stroke-width="0.9" stroke-linejoin="round" />
<path d="M828.5 479.5L878.4 488.4L878.5 494.0L828.6 485.0Z" fill="#5b9cac" stroke="#225f70" stroke-width="0.6" stroke-linejoin="round" />
<path d="M853.0 492.0L878.6 496.5L879.2 545.0L853.0 541.0Z" fill="#46899a" stroke="#256577" stroke-width="0.6" stroke-linejoin="round" />
<path d="M829.0 486.0L838.0 487.5L839.0 546.0L830.0 551.0Z" fill="#2d7b90" stroke="#256577" stroke-width="0.5" stroke-linejoin="round" />
<path d="M838.0 487.5L853.0 492.0L853.0 541.0L839.0 546.0Z" fill="#398396" stroke="#256577" stroke-width="0.5" stroke-linejoin="round" />
<path d="M830.0 551.0L853.0 541.0L879.2 545.0L879.4 556.5Z" fill="#337e92" stroke="#256577" stroke-width="0.5" stroke-linejoin="round" />
<path d="M829.8 552.2L829.9 549.0L879.4 557.0L879.4 560.8Z" fill="#5496a7" stroke="#235f70" stroke-width="0.6" stroke-linejoin="round" />
<path d="M848 552.5V555.3M851 553V555.8M854 553.5V556.3M857 554V556.8M860 554.5V557.3M863 555V557.8M866 555.5V558.3M869 556V558.8M872 556.5V559.3" stroke="#256577" stroke-width=".7" fill="none"/>
<path d="M859.5 509.5L866.0 507.5L879.0 509.3L879.0 517.0L874.5 519.5L859.8 517.3Z" fill="#4a8e9f" stroke="#25687b" stroke-width="0.7" stroke-linejoin="round" />
<path d="M859.5 509.5L874.5 511.8L874.5 519.5" fill="none" stroke="#25687b" stroke-width="0.6" stroke-linecap="round"/>
<path d="M874.5 511.8L879.0 509.3" fill="none" stroke="#25687b" stroke-width="0.6" stroke-linecap="round"/><defs>
<linearGradient id="vcF" x1="0" y1="0" x2="0" y2="1"><stop offset="0" stop-color="#efefef"/><stop offset="1" stop-color="#e2e2e2"/></linearGradient>
<linearGradient id="vcR" x1="0" y1="0" x2="0" y2="1"><stop offset="0" stop-color="#e9e9e9"/><stop offset="1" stop-color="#d7d7d7"/></linearGradient>
<filter id="vcb" x="-30%" y="-30%" width="160%" height="160%"><feGaussianBlur stdDeviation="3"/></filter>
</defs>
<path d="M1826 230L1864 240L1889 225L1893 232L1866 250L1830 240Z" fill="#9a9a9a" opacity=".7" filter="url(#vcb)"/>
<path d="M1822.0 181.2L1863.4 186.4L1863.4 238.4L1824.6 228.4Z" fill="url(#vcF)" stroke="none" stroke-width="1.1" stroke-linejoin="round" />
<path d="M1863.4 186.4L1889.2 179.6L1887.6 223.2L1863.4 238.4Z" fill="url(#vcR)" stroke="none" stroke-width="1.1" stroke-linejoin="round" />
<path d="M1822.0 181.2L1850.9 175.4L1889.2 179.6L1863.4 186.4Z" fill="#f3f3f3" stroke="none" stroke-width="1.1" stroke-linejoin="round" />
<path d="M1855.2 196.0L1863.4 197.0L1868.5 195.8L1868.5 227.0L1863.4 228.0L1855.2 226.0Z" fill="#dcdde0" stroke="none" stroke-width="1.1" stroke-linejoin="round" />
<path d="M1822.0 181.2L1863.4 186.4" stroke="#8e8e8e" stroke-width="0.9" fill="none" stroke-dasharray="6 2.5"/>
<path d="M1863.4 186.4L1863.4 238.4" stroke="#8e8e8e" stroke-width="0.9" fill="none" stroke-dasharray="6 2.5"/>
<path d="M1863.4 238.4L1824.6 228.4" stroke="#bdbdbd" stroke-width="0.9" fill="none" stroke-dasharray="6 2.5"/>
<path d="M1824.6 228.4L1822.0 181.2" stroke="#a8a8a8" stroke-width="0.9" fill="none" stroke-dasharray="6 2.5"/>
<path d="M1863.4 186.4L1889.2 179.6" stroke="#8e8e8e" stroke-width="0.9" fill="none" stroke-dasharray="6 2.5"/>
<path d="M1889.2 179.6L1887.6 223.2" stroke="#a8a8a8" stroke-width="0.9" fill="none" stroke-dasharray="6 2.5"/>
<path d="M1887.6 223.2L1863.4 238.4" stroke="#bdbdbd" stroke-width="0.9" fill="none" stroke-dasharray="6 2.5"/>
<path d="M1822.0 181.2L1850.9 175.4" stroke="#9a9a9a" stroke-width="0.9" fill="none" stroke-dasharray="6 2.5"/>
<path d="M1850.9 175.4L1889.2 179.6" stroke="#9a9a9a" stroke-width="0.9" fill="none" stroke-dasharray="6 2.5"/>
<path d="M1838 181L1846 178M1849 182L1857 179M1852 177L1860 180M1862 178L1872 180M1870 177L1880 179" stroke="#b5b5b5" stroke-width="0.9" fill="none" stroke-dasharray="4 2"/>
<path d="M1851.5 168.5L1851.5 175" stroke="#66ff66" stroke-width="1.6"/>
<path d="M1824.6 228.4L1819 231" stroke="#6a6aff" stroke-width="1.4"/>
<path d="M1887.6 223.6L1894.5 225" stroke="#ff8080" stroke-width="1.4"/>
<text x="1850.8" y="167.2" font-family="Liberation Sans, sans-serif" font-size="13" fill="#66ff66" text-anchor="middle" textLength="7" lengthAdjust="spacingAndGlyphs">Y</text>
<text x="1813" y="237.6" font-family="Liberation Sans, sans-serif" font-size="13.5" fill="#6a6aff" text-anchor="middle">Z</text>
<text x="1900.6" y="231.6" font-family="Liberation Sans, sans-serif" font-size="13.5" fill="#ff8080" text-anchor="middle" textLength="8" lengthAdjust="spacingAndGlyphs">X</text>
<text transform="matrix(1 0.125 0 1 1842 216.5)" font-family="Liberation Sans, Noto Sans CJK JP, sans-serif" font-size="25" fill="#8e9196" text-anchor="middle" font-weight="400">前</text>
<text transform="matrix(0.62 -0.16 0 1 1876.5 216)" font-family="Liberation Sans, Noto Sans CJK JP, sans-serif" font-size="25" fill="#8e9196" text-anchor="middle" font-weight="400">右</text></svg></div>
<div class="abs" style="left:4px;top:144px;width:298px;height:23px;border:1px solid #c6c6c6;background:#f2f2f2"></div>
<svg class="abs" style="left:9px;top:153px;" width="12" height="8" viewBox="0 0 12 8" ><path d="M5.3 0V7L0 3.5ZM10.8 0V7L5.5 3.5Z" fill="#222"/></svg>
<span class="t" style="left:29px;top:147.5px;font-size:11.5px;font-weight:500;color:#666;transform:scaleX(0.7174)">ブラウザ</span>
<svg class="abs" style="left:282.5px;top:151.5px;" width="10" height="10" viewBox="0 0 10 10" ><circle cx="5" cy="5" r="4.6" fill="#1c1c1c"/><rect x="2.2" y="4.2" width="5.6" height="1.6" fill="#f2f2f2"/></svg>
<div class="abs" style="left:8px;top:174px;width:6px;height:814px;background:#c6c6c8;border-radius:3px 3px 0 0"></div>
<div class="abs" style="left:8px;top:174px;width:6px;height:169px;background:#9d9d9f;border-radius:3px"></div>
<div class="abs" style="left:40px;top:174px;width:188px;height:20px;background:#f1f1f1;"></div>
<svg class="abs" style="left:21.5px;top:178px;" width="11" height="12" viewBox="0 0 11 12" ><path d="M10.500 .8V11.200H.5Z" fill="url(#trg)" stroke="#222" stroke-width=".9" stroke-linejoin="round"/></svg>
<svg class="abs" style="left:43px;top:178px;" width="16" height="12" viewBox="0 0 16 12" ><path d="M.3 6Q8 -3.600 15.700 6Q8 15.600 .3 6Z" fill="#999"/><circle cx="8" cy="6" r="3.200" fill="#f1f1f1"/><circle cx="8" cy="6" r="1.900" fill="#999"/></svg>
<div class="abs" style="left:65px;top:176px;width:138px;height:16px;background:#9a9a9a;"></div>
<svg class="abs" style="left:68px;top:176px;" width="16" height="16" viewBox="0 0 16 16" ><path d="M1 5.5L5 1H15V11L11 15.500H1Z" fill="#f4f5f8" stroke="#333" stroke-width="1.100" stroke-linejoin="round"/><path d="M11 5.500L15 1V11L11 15.500Z" fill="#c9ccd6"/><path d="M1 5.5H11V15.5M11 5.500L15 1" fill="none" stroke="#333" stroke-width=".5" opacity=".35"/></svg>
<span class="t" style="left:98px;top:174.5px;font-size:11.5px;font-weight:700;color:#fff;transform:scaleX(0.9404)">CZ-620H_1_25 v28</span>
<svg class="abs" style="left:206.5px;top:177px;" width="14" height="14" viewBox="0 0 14 14" ><circle cx="7" cy="7" r="6" fill="#fff" stroke="#222" stroke-width="1"/><circle cx="7" cy="7" r="2.200" fill="#222"/></svg>
<div class="abs" style="left:58px;top:198px;width:122px;height:20px;background:#f1f1f1;"></div>
<svg class="abs" style="left:39.5px;top:201px;" width="11" height="14" viewBox="0 0 11 14" ><path d="M1 .8L9.500 7L1 13.200Z" fill="#e9e9ee" stroke="#222" stroke-width="1.200" stroke-linejoin="round"/></svg>
<span class="t" style="left:91px;top:199.5px;font-size:11.5px;font-weight:500;color:#333"><span class="r" style="transform:scaleX(0.7010);margin-right:-24.07px">ドキュメントの</span><span class="r" style="transform:scaleX(0.9379);margin-right:-1.43px">設定</span></span>
<svg class="abs" style="left:61px;top:200px;" width="16" height="16" viewBox="0 0 16 16" ><path d="M15.96 8.78L15.66 10.32L12.94 10.64L12.33 11.55L13.08 14.18L11.77 15.06L9.63 13.36L8.55 13.57L7.22 15.96L5.68 15.66L5.36 12.94L4.45 12.33L1.82 13.08L0.94 11.77L2.64 9.63L2.43 8.55L0.04 7.22L0.34 5.68L3.06 5.36L3.67 4.45L2.92 1.82L4.23 0.94L6.37 2.64L7.45 2.43L8.78 0.04L10.32 0.34L10.64 3.06L11.55 3.67L14.18 2.92L15.06 4.23L13.36 6.37L13.57 7.45Z" fill="#9a9a9a"/><circle cx="8" cy="8" r="2.6" fill="#f1f1f1"/></svg>
<div class="abs" style="left:58px;top:222px;width:126px;height:20px;background:#f1f1f1;"></div>
<svg class="abs" style="left:39.5px;top:225px;" width="11" height="14" viewBox="0 0 11 14" ><path d="M1 .8L9.500 7L1 13.200Z" fill="#e9e9ee" stroke="#222" stroke-width="1.200" stroke-linejoin="round"/></svg>
<span class="t" style="left:91px;top:223.5px;font-size:11.5px;font-weight:500;color:#333"><span class="r" style="transform:scaleX(0.9527);margin-right:-1.09px">名前</span><span class="r" style="transform:scaleX(0.7120);margin-right:-3.31px">の</span><span class="r" style="transform:scaleX(0.9527);margin-right:-0.54px">付</span><span class="r" style="transform:scaleX(0.7120);margin-right:-16.56px">いたビュー</span></span>
<svg class="abs" style="left:61px;top:225.5px;" width="16" height="13" viewBox="0 0 16 13" ><path d="M0 1.5Q0 .7 .8 .7H6L7.5 2.5H15.2Q16 2.5 16 3.3V3.8H0Z" fill="#9a9a9a"/><path d="M0 4.6H16V12.2Q16 13 15.200 13H.8Q0 13 0 12.2Z" fill="#9a9a9a"/></svg>
<div class="abs" style="left:58px;top:246px;width:91px;height:20px;background:#f1f1f1;"></div>
<svg class="abs" style="left:39.5px;top:249px;" width="11" height="14" viewBox="0 0 11 14" ><path d="M1 .8L9.500 7L1 13.200Z" fill="#e9e9ee" stroke="#222" stroke-width="1.200" stroke-linejoin="round"/></svg>
<span class="t" style="left:116px;top:247.5px;font-size:11.5px;font-weight:500;color:#333;transform:scaleX(0.9565)">原点</span>
<svg class="abs" style="left:61px;top:250px;" width="16" height="12" viewBox="0 0 16 12" ><path d="M.8 6Q8 -2.6 15.2 6Q8 14.6 .8 6Z" fill="none" stroke="#b4b4b4" stroke-width="1"/><circle cx="8" cy="6" r="2.8" fill="none" stroke="#b4b4b4" stroke-width="1"/><path d="M3 .5L13 11.5" stroke="#b4b4b4" stroke-width="1.1"/></svg>
<svg class="abs" style="left:86px;top:249.5px;" width="16" height="13" viewBox="0 0 16 13" ><path d="M0 1.5Q0 .7 .8 .7H6L7.5 2.5H15.2Q16 2.5 16 3.3V3.8H0Z" fill="#9a9a9a"/><path d="M0 4.6H16V12.2Q16 13 15.200 13H.8Q0 13 0 12.2Z" fill="#9a9a9a"/></svg>
<div class="abs" style="left:58px;top:270px;width:95px;height:20px;background:#f1f1f1;"></div>
<svg class="abs" style="left:39px;top:274px;" width="11" height="12" viewBox="0 0 11 12" ><path d="M10.500 .8V11.200H.5Z" fill="url(#trg)" stroke="#222" stroke-width=".9" stroke-linejoin="round"/></svg>
<span class="t" style="left:116px;top:271.5px;font-size:11.5px;font-weight:500;color:#333;transform:scaleX(0.7418)">ボディ</span>
<svg class="abs" style="left:61px;top:274px;" width="16" height="12" viewBox="0 0 16 12" ><path d="M.3 6Q8 -3.600 15.700 6Q8 15.600 .3 6Z" fill="#999"/><circle cx="8" cy="6" r="3.200" fill="#f1f1f1"/><circle cx="8" cy="6" r="1.900" fill="#999"/></svg>
<svg class="abs" style="left:86px;top:273.5px;" width="16" height="13" viewBox="0 0 16 13" ><path d="M0 1.5Q0 .7 .8 .7H6L7.5 2.5H15.2Q16 2.5 16 3.3V3.8H0Z" fill="#9a9a9a"/><path d="M0 4.6H16V12.2Q16 13 15.200 13H.8Q0 13 0 12.2Z" fill="#9a9a9a"/></svg>
<div class="abs" style="left:76px;top:294px;width:143px;height:20px;background:#f1f1f1;"></div>
<span class="t" style="left:134px;top:295.5px;font-size:11.5px;font-weight:500;color:#333"><span class="r" style="transform:scaleX(0.7213);margin-right:-22.44px">フロントパネル</span><span class="r" style="transform:scaleX(0.5079);margin-right:-5.66px">・</span><span class="r" style="transform:scaleX(0.9651);margin-right:-0.40px">下</span></span>
<svg class="abs" style="left:79px;top:298px;" width="16" height="12" viewBox="0 0 16 12" ><path d="M.3 6Q8 -3.600 15.700 6Q8 15.600 .3 6Z" fill="#999"/><circle cx="8" cy="6" r="3.200" fill="#f1f1f1"/><circle cx="8" cy="6" r="1.900" fill="#999"/></svg>
<svg class="abs" style="left:104px;top:296px;" width="16" height="16" viewBox="0 0 16 16" ><rect x=".7" y=".7" width="14.6" height="14.6" rx="4" fill="#fff" stroke="#333" stroke-width="1.2"/><path d="M4 6H12.5V11.5Q12.500 14 10 14H6.5Q4 14 4 11.500Z" fill="url(#bdg)"/></svg>
<div class="abs" style="left:76px;top:318px;width:143px;height:20px;background:#f1f1f1;"></div>
<span class="t" style="left:134px;top:319.5px;font-size:11.5px;font-weight:500;color:#333"><span class="r" style="transform:scaleX(0.7213);margin-right:-22.44px">フロントパネル</span><span class="r" style="transform:scaleX(0.5079);margin-right:-5.66px">・</span><span class="r" style="transform:scaleX(0.9651);margin-right:-0.40px">上</span></span>
<svg class="abs" style="left:79px;top:322px;" width="16" height="12" viewBox="0 0 16 12" ><path d="M.3 6Q8 -3.600 15.700 6Q8 15.600 .3 6Z" fill="#999"/><circle cx="8" cy="6" r="3.200" fill="#f1f1f1"/><circle cx="8" cy="6" r="1.900" fill="#999"/></svg>
<svg class="abs" style="left:104px;top:320px;" width="16" height="16" viewBox="0 0 16 16" ><rect x=".7" y=".7" width="14.6" height="14.6" rx="4" fill="#fff" stroke="#333" stroke-width="1.2"/><path d="M4 6H12.5V11.5Q12.500 14 10 14H6.5Q4 14 4 11.500Z" fill="url(#bdg)"/></svg>
<div class="abs" style="left:76px;top:342px;width:99px;height:20px;background:#f1f1f1;"></div>
<span class="t" style="left:134px;top:343.5px;font-size:11.5px;font-weight:500;color:#333;transform:scaleX(0.6739)">スイッチ</span>
<svg class="abs" style="left:79px;top:346px;" width="16" height="12" viewBox="0 0 16 12" ><path d="M.3 6Q8 -3.600 15.700 6Q8 15.600 .3 6Z" fill="#999"/><circle cx="8" cy="6" r="3.200" fill="#f1f1f1"/><circle cx="8" cy="6" r="1.900" fill="#999"/></svg>
<svg class="abs" style="left:104px;top:344px;" width="16" height="16" viewBox="0 0 16 16" ><rect x=".7" y=".7" width="14.6" height="14.6" rx="4" fill="#fff" stroke="#333" stroke-width="1.2"/><path d="M4 6H12.5V11.5Q12.500 14 10 14H6.5Q4 14 4 11.500Z" fill="url(#bdg)"/></svg>
<div class="abs" style="left:76px;top:366px;width:99px;height:20px;background:#f1f1f1;"></div>
<span class="t" style="left:134px;top:367.5px;font-size:11.5px;font-weight:500;color:#333"><span class="r" style="transform:scaleX(0.8899);margin-right:-2.46px">LED</span><span class="r" style="transform:scaleX(0.4684);margin-right:-6.11px">・</span><span class="r" style="transform:scaleX(0.8899);margin-right:-0.71px">2</span></span>
<svg class="abs" style="left:79px;top:370px;" width="16" height="12" viewBox="0 0 16 12" ><path d="M.3 6Q8 -3.600 15.700 6Q8 15.600 .3 6Z" fill="#999"/><circle cx="8" cy="6" r="3.200" fill="#f1f1f1"/><circle cx="8" cy="6" r="1.900" fill="#999"/></svg>
<svg class="abs" style="left:104px;top:368px;" width="16" height="16" viewBox="0 0 16 16" ><rect x=".7" y=".7" width="14.6" height="14.6" rx="4" fill="#fff" stroke="#333" stroke-width="1.2"/><path d="M4 6H12.5V11.5Q12.500 14 10 14H6.5Q4 14 4 11.500Z" fill="url(#bdg)"/></svg>
<div class="abs" style="left:76px;top:390px;width:99px;height:20px;background:#f1f1f1;"></div>
<span class="t" style="left:134px;top:391.5px;font-size:11.5px;font-weight:500;color:#333"><span class="r" style="transform:scaleX(0.8612);margin-right:-3.10px">LED</span><span class="r" style="transform:scaleX(0.4533);margin-right:-6.29px">・</span><span class="r" style="transform:scaleX(0.8612);margin-right:-0.89px">1</span></span>
<svg class="abs" style="left:79px;top:394px;" width="16" height="12" viewBox="0 0 16 12" ><path d="M.3 6Q8 -3.600 15.700 6Q8 15.600 .3 6Z" fill="#999"/><circle cx="8" cy="6" r="3.200" fill="#f1f1f1"/><circle cx="8" cy="6" r="1.900" fill="#999"/></svg>
<svg class="abs" style="left:104px;top:392px;" width="16" height="16" viewBox="0 0 16 16" ><rect x=".7" y=".7" width="14.6" height="14.6" rx="4" fill="#fff" stroke="#333" stroke-width="1.2"/><path d="M4 6H12.5V11.5Q12.500 14 10 14H6.5Q4 14 4 11.500Z" fill="url(#bdg)"/></svg>
<div class="abs" style="left:76px;top:414px;width:91px;height:20px;background:#f1f1f1;"></div>
<span class="t" style="left:134px;top:415.5px;font-size:11.5px;font-weight:500;color:#333"><span class="r" style="transform:scaleX(0.9600);margin-right:-0.46px">足</span><span class="r" style="transform:scaleX(0.5053);margin-right:-5.69px">・</span><span class="r" style="transform:scaleX(0.9600);margin-right:-0.26px">4</span></span>
<svg class="abs" style="left:79px;top:418px;" width="16" height="12" viewBox="0 0 16 12" ><path d="M.3 6Q8 -3.600 15.700 6Q8 15.600 .3 6Z" fill="#999"/><circle cx="8" cy="6" r="3.200" fill="#f1f1f1"/><circle cx="8" cy="6" r="1.900" fill="#999"/></svg>
<svg class="abs" style="left:104px;top:416px;" width="16" height="16" viewBox="0 0 16 16" ><rect x=".7" y=".7" width="14.6" height="14.6" rx="4" fill="#fff" stroke="#333" stroke-width="1.2"/><path d="M4 6H12.5V11.5Q12.500 14 10 14H6.5Q4 14 4 11.500Z" fill="url(#bdg)"/></svg>
<div class="abs" style="left:76px;top:438px;width:91px;height:20px;background:#f1f1f1;"></div>
<span class="t" style="left:134px;top:439.5px;font-size:11.5px;font-weight:500;color:#333"><span class="r" style="transform:scaleX(0.9600);margin-right:-0.46px">足</span><span class="r" style="transform:scaleX(0.5053);margin-right:-5.69px">・</span><span class="r" style="transform:scaleX(0.9600);margin-right:-0.26px">3</span></span>
<svg class="abs" style="left:79px;top:442px;" width="16" height="12" viewBox="0 0 16 12" ><path d="M.3 6Q8 -3.600 15.700 6Q8 15.600 .3 6Z" fill="#999"/><circle cx="8" cy="6" r="3.200" fill="#f1f1f1"/><circle cx="8" cy="6" r="1.900" fill="#999"/></svg>
<svg class="abs" style="left:104px;top:440px;" width="16" height="16" viewBox="0 0 16 16" ><rect x=".7" y=".7" width="14.6" height="14.6" rx="4" fill="#fff" stroke="#333" stroke-width="1.2"/><path d="M4 6H12.5V11.5Q12.500 14 10 14H6.5Q4 14 4 11.500Z" fill="url(#bdg)"/></svg>
<div class="abs" style="left:76px;top:462px;width:91px;height:20px;background:#f1f1f1;"></div>
<span class="t" style="left:134px;top:463.5px;font-size:11.5px;font-weight:500;color:#333"><span class="r" style="transform:scaleX(0.9600);margin-right:-0.46px">足</span><span class="r" style="transform:scaleX(0.5053);margin-right:-5.69px">・</span><span class="r" style="transform:scaleX(0.9600);margin-right:-0.26px">2</span></span>
<svg class="abs" style="left:79px;top:466px;" width="16" height="12" viewBox="0 0 16 12" ><path d="M.3 6Q8 -3.600 15.700 6Q8 15.600 .3 6Z" fill="#999"/><circle cx="8" cy="6" r="3.200" fill="#f1f1f1"/><circle cx="8" cy="6" r="1.900" fill="#999"/></svg>
<svg class="abs" style="left:104px;top:464px;" width="16" height="16" viewBox="0 0 16 16" ><rect x=".7" y=".7" width="14.6" height="14.6" rx="4" fill="#fff" stroke="#333" stroke-width="1.2"/><path d="M4 6H12.5V11.5Q12.500 14 10 14H6.5Q4 14 4 11.500Z" fill="url(#bdg)"/></svg>
<div class="abs" style="left:76px;top:486px;width:87px;height:20px;background:#f1f1f1;"></div>
<span class="t" style="left:134px;top:487.5px;font-size:11.5px;font-weight:500;color:#333"><span class="r" style="transform:scaleX(0.9182);margin-right:-0.94px">足</span><span class="r" style="transform:scaleX(0.4833);margin-right:-5.94px">・</span><span class="r" style="transform:scaleX(0.9182);margin-right:-0.52px">1</span></span>
<svg class="abs" style="left:79px;top:490px;" width="16" height="12" viewBox="0 0 16 12" ><path d="M.3 6Q8 -3.600 15.700 6Q8 15.600 .3 6Z" fill="#999"/><circle cx="8" cy="6" r="3.200" fill="#f1f1f1"/><circle cx="8" cy="6" r="1.900" fill="#999"/></svg>
<svg class="abs" style="left:104px;top:488px;" width="16" height="16" viewBox="0 0 16 16" ><rect x=".7" y=".7" width="14.6" height="14.6" rx="4" fill="#fff" stroke="#333" stroke-width="1.2"/><path d="M4 6H12.5V11.5Q12.500 14 10 14H6.5Q4 14 4 11.500Z" fill="url(#bdg)"/></svg>
<div class="abs" style="left:76px;top:510px;width:123px;height:20px;background:#f1f1f1;"></div>
<span class="t" style="left:134px;top:511.5px;font-size:11.5px;font-weight:500;color:#333;transform:scaleX(0.6832)">スイッチカバー</span>
<svg class="abs" style="left:79px;top:514px;" width="16" height="12" viewBox="0 0 16 12" ><path d="M.3 6Q8 -3.600 15.700 6Q8 15.600 .3 6Z" fill="#999"/><circle cx="8" cy="6" r="3.200" fill="#f1f1f1"/><circle cx="8" cy="6" r="1.900" fill="#999"/></svg>
<svg class="abs" style="left:104px;top:512px;" width="16" height="16" viewBox="0 0 16 16" ><rect x=".7" y=".7" width="14.6" height="14.6" rx="4" fill="#fff" stroke="#333" stroke-width="1.2"/><path d="M4 6H12.5V11.5Q12.500 14 10 14H6.5Q4 14 4 11.500Z" fill="url(#bdg)"/></svg>
<div class="abs" style="left:76px;top:534px;width:119px;height:20px;background:#f1f1f1;"></div>
<span class="t" style="left:134px;top:535.5px;font-size:11.5px;font-weight:500;color:#333"><span class="r" style="transform:scaleX(0.7165);margin-right:-9.56px">ボディ</span><span class="r" style="transform:scaleX(0.5046);margin-right:-5.70px">・</span><span class="r" style="transform:scaleX(0.9587);margin-right:-0.95px">前面</span></span>
<svg class="abs" style="left:79px;top:538px;" width="16" height="12" viewBox="0 0 16 12" ><path d="M.3 6Q8 -3.600 15.700 6Q8 15.600 .3 6Z" fill="#999"/><circle cx="8" cy="6" r="3.200" fill="#f1f1f1"/><circle cx="8" cy="6" r="1.900" fill="#999"/></svg>
<svg class="abs" style="left:104px;top:536px;" width="16" height="16" viewBox="0 0 16 16" ><rect x=".7" y=".7" width="14.6" height="14.6" rx="4" fill="#fff" stroke="#333" stroke-width="1.2"/><path d="M4 6H12.5V11.5Q12.500 14 10 14H6.5Q4 14 4 11.500Z" fill="url(#bdg)"/></svg>
<div class="abs" style="left:76px;top:558px;width:119px;height:20px;background:#f1f1f1;"></div>
<span class="t" style="left:134px;top:559.5px;font-size:11.5px;font-weight:500;color:#333"><span class="r" style="transform:scaleX(0.7165);margin-right:-9.56px">ボディ</span><span class="r" style="transform:scaleX(0.5046);margin-right:-5.70px">・</span><span class="r" style="transform:scaleX(0.9587);margin-right:-0.95px">背面</span></span>
<svg class="abs" style="left:79px;top:562px;" width="16" height="12" viewBox="0 0 16 12" ><path d="M.3 6Q8 -3.600 15.700 6Q8 15.600 .3 6Z" fill="#999"/><circle cx="8" cy="6" r="3.200" fill="#f1f1f1"/><circle cx="8" cy="6" r="1.900" fill="#999"/></svg>
<svg class="abs" style="left:104px;top:560px;" width="16" height="16" viewBox="0 0 16 16" ><rect x=".7" y=".7" width="14.6" height="14.6" rx="4" fill="#fff" stroke="#333" stroke-width="1.2"/><path d="M4 6H12.5V11.5Q12.500 14 10 14H6.5Q4 14 4 11.500Z" fill="url(#bdg)"/></svg>
<div class="abs" style="left:76px;top:582px;width:119px;height:20px;background:#f1f1f1;"></div>
<span class="t" style="left:134px;top:583.5px;font-size:11.5px;font-weight:500;color:#333"><span class="r" style="transform:scaleX(0.7165);margin-right:-9.56px">ボディ</span><span class="r" style="transform:scaleX(0.5046);margin-right:-5.70px">・</span><span class="r" style="transform:scaleX(0.9587);margin-right:-0.95px">右面</span></span>
<svg class="abs" style="left:79px;top:586px;" width="16" height="12" viewBox="0 0 16 12" ><path d="M.3 6Q8 -3.600 15.700 6Q8 15.600 .3 6Z" fill="#999"/><circle cx="8" cy="6" r="3.200" fill="#f1f1f1"/><circle cx="8" cy="6" r="1.900" fill="#999"/></svg>
<svg class="abs" style="left:104px;top:584px;" width="16" height="16" viewBox="0 0 16 16" ><rect x=".7" y=".7" width="14.6" height="14.6" rx="4" fill="#fff" stroke="#333" stroke-width="1.2"/><path d="M4 6H12.5V11.5Q12.500 14 10 14H6.5Q4 14 4 11.500Z" fill="url(#bdg)"/></svg>
<div class="abs" style="left:76px;top:606px;width:119px;height:20px;background:#f1f1f1;"></div>
<span class="t" style="left:134px;top:607.5px;font-size:11.5px;font-weight:500;color:#333"><span class="r" style="transform:scaleX(0.7165);margin-right:-9.56px">ボディ</span><span class="r" style="transform:scaleX(0.5046);margin-right:-5.70px">・</span><span class="r" style="transform:scaleX(0.9587);margin-right:-0.95px">上面</span></span>
<svg class="abs" style="left:79px;top:610px;" width="16" height="12" viewBox="0 0 16 12" ><path d="M.3 6Q8 -3.600 15.700 6Q8 15.600 .3 6Z" fill="#999"/><circle cx="8" cy="6" r="3.200" fill="#f1f1f1"/><circle cx="8" cy="6" r="1.900" fill="#999"/></svg>
<svg class="abs" style="left:104px;top:608px;" width="16" height="16" viewBox="0 0 16 16" ><rect x=".7" y=".7" width="14.6" height="14.6" rx="4" fill="#fff" stroke="#333" stroke-width="1.2"/><path d="M4 6H12.5V11.5Q12.500 14 10 14H6.5Q4 14 4 11.500Z" fill="url(#bdg)"/></svg>
<div class="abs" style="left:76px;top:630px;width:123px;height:20px;background:#f1f1f1;"></div>
<span class="t" style="left:134px;top:631.5px;font-size:11.5px;font-weight:500;color:#333"><span class="r" style="transform:scaleX(0.7165);margin-right:-9.56px">ボディ</span><span class="r" style="transform:scaleX(0.5046);margin-right:-5.70px">・</span><span class="r" style="transform:scaleX(0.9587);margin-right:-0.95px">底面</span></span>
<svg class="abs" style="left:79px;top:634px;" width="16" height="12" viewBox="0 0 16 12" ><path d="M.3 6Q8 -3.600 15.700 6Q8 15.600 .3 6Z" fill="#999"/><circle cx="8" cy="6" r="3.200" fill="#f1f1f1"/><circle cx="8" cy="6" r="1.900" fill="#999"/></svg>
<svg class="abs" style="left:104px;top:632px;" width="16" height="16" viewBox="0 0 16 16" ><rect x=".7" y=".7" width="14.6" height="14.6" rx="4" fill="#fff" stroke="#333" stroke-width="1.2"/><path d="M4 6H12.5V11.5Q12.500 14 10 14H6.5Q4 14 4 11.500Z" fill="url(#bdg)"/></svg>
<div class="abs" style="left:76px;top:654px;width:119px;height:20px;background:#f1f1f1;"></div>
<span class="t" style="left:134px;top:655.5px;font-size:11.5px;font-weight:500;color:#333"><span class="r" style="transform:scaleX(0.7165);margin-right:-9.56px">ボディ</span><span class="r" style="transform:scaleX(0.5046);margin-right:-5.70px">・</span><span class="r" style="transform:scaleX(0.9587);margin-right:-0.95px">左面</span></span>
<svg class="abs" style="left:79px;top:658px;" width="16" height="12" viewBox="0 0 16 12" ><path d="M.3 6Q8 -3.600 15.700 6Q8 15.600 .3 6Z" fill="#999"/><circle cx="8" cy="6" r="3.200" fill="#f1f1f1"/><circle cx="8" cy="6" r="1.900" fill="#999"/></svg>
<svg class="abs" style="left:104px;top:656px;" width="16" height="16" viewBox="0 0 16 16" ><rect x=".7" y=".7" width="14.6" height="14.6" rx="4" fill="#fff" stroke="#333" stroke-width="1.2"/><path d="M4 6H12.5V11.5Q12.500 14 10 14H6.5Q4 14 4 11.500Z" fill="url(#bdg)"/></svg>
<div class="abs" style="left:76px;top:678px;width:155px;height:20px;background:#f1f1f1;"></div>
<span class="t" style="left:134px;top:679.5px;font-size:11.5px;font-weight:500;color:#333"><span class="r" style="transform:scaleX(0.7084);margin-right:-9.83px">ボディ</span><span class="r" style="transform:scaleX(0.4989);margin-right:-5.76px">・</span><span class="r" style="transform:scaleX(0.9479);margin-right:-1.20px">前面</span><span class="r" style="transform:scaleX(0.7084);margin-right:-13.41px">スイッチ</span></span>
<svg class="abs" style="left:79px;top:682px;" width="16" height="12" viewBox="0 0 16 12" ><path d="M.3 6Q8 -3.600 15.700 6Q8 15.600 .3 6Z" fill="#999"/><circle cx="8" cy="6" r="3.200" fill="#f1f1f1"/><circle cx="8" cy="6" r="1.900" fill="#999"/></svg>
<svg class="abs" style="left:104px;top:680px;" width="16" height="16" viewBox="0 0 16 16" ><rect x=".7" y=".7" width="14.6" height="14.6" rx="4" fill="#fff" stroke="#333" stroke-width="1.2"/><path d="M4 6H12.5V11.5Q12.500 14 10 14H6.5Q4 14 4 11.500Z" fill="url(#bdg)"/></svg>
<div class="abs" style="left:58px;top:702px;width:111px;height:20px;background:#f1f1f1;"></div>
<svg class="abs" style="left:39.5px;top:705px;" width="11" height="14" viewBox="0 0 11 14" ><path d="M1 .8L9.500 7L1 13.200Z" fill="#e9e9ee" stroke="#222" stroke-width="1.200" stroke-linejoin="round"/></svg>
<span class="t" style="left:116px;top:703.5px;font-size:11.5px;font-weight:500;color:#333;transform:scaleX(0.7130)">キャンバス</span>
<svg class="abs" style="left:61px;top:706px;" width="16" height="12" viewBox="0 0 16 12" ><path d="M.3 6Q8 -3.600 15.700 6Q8 15.600 .3 6Z" fill="#999"/><circle cx="8" cy="6" r="3.200" fill="#f1f1f1"/><circle cx="8" cy="6" r="1.900" fill="#999"/></svg>
<svg class="abs" style="left:86px;top:705.5px;" width="16" height="13" viewBox="0 0 16 13" ><path d="M0 1.5Q0 .7 .8 .7H6L7.5 2.5H15.2Q16 2.5 16 3.3V3.8H0Z" fill="#9a9a9a"/><path d="M0 4.6H16V12.2Q16 13 15.200 13H.8Q0 13 0 12.2Z" fill="#9a9a9a"/></svg>
<div class="abs" style="left:58px;top:726px;width:99px;height:20px;background:#f1f1f1;"></div>
<svg class="abs" style="left:39.5px;top:729px;" width="11" height="14" viewBox="0 0 11 14" ><path d="M1 .8L9.500 7L1 13.200Z" fill="#e9e9ee" stroke="#222" stroke-width="1.200" stroke-linejoin="round"/></svg>
<span class="t" style="left:116px;top:727.5px;font-size:11.5px;font-weight:500;color:#333;transform:scaleX(0.6739)">スケッチ</span>
<svg class="abs" style="left:61px;top:730px;" width="16" height="12" viewBox="0 0 16 12" ><path d="M.3 6Q8 -3.600 15.700 6Q8 15.600 .3 6Z" fill="#999"/><circle cx="8" cy="6" r="3.200" fill="#f1f1f1"/><circle cx="8" cy="6" r="1.900" fill="#999"/></svg>
<svg class="abs" style="left:86px;top:729.5px;" width="16" height="13" viewBox="0 0 16 13" ><path d="M0 1.5Q0 .7 .8 .7H6L7.5 2.5H15.2Q16 2.5 16 3.3V3.8H0Z" fill="#9a9a9a"/><path d="M0 4.6H16V12.2Q16 13 15.200 13H.8Q0 13 0 12.2Z" fill="#9a9a9a"/></svg>
<div class="abs" style="left:58px;top:750px;width:86px;height:20px;background:#f1f1f1;"></div>
<span class="t" style="left:91px;top:751.5px;font-size:11.5px;font-weight:500;color:#333"><span class="r" style="transform:scaleX(0.9228);margin-right:-0.89px">押</span><span class="r" style="transform:scaleX(0.6897);margin-right:-3.57px">し</span><span class="r" style="transform:scaleX(0.9228);margin-right:-0.89px">出</span><span class="r" style="transform:scaleX(0.6897);margin-right:-3.57px">し</span><span class="r" style="transform:scaleX(0.9228);margin-right:-0.49px">1</span></span>
<svg class="abs" style="left:61px;top:752px;" width="17" height="16" viewBox="0 0 17 16" ><path d="M0 12.500H9.500L12.500 10V12.500L9.500 15.500H0Z" fill="#c2c2c2"/><path d="M0 3.500H9.500V12.500H0Z" fill="#6bb0e3"/><path d="M0 3.500L3 .5H12.500L9.500 3.500Z" fill="#8ccbf7"/><path d="M9.500 3.500L12.500 .5V10L9.500 12.500Z" fill="#4792cc"/><path d="M14.800 12V2" stroke="#222" stroke-width="1"/><path d="M14.800 0L13.300 3H16.300Z" fill="#222"/></svg>
<div class="abs" style="left:58px;top:774px;width:86px;height:20px;background:#f1f1f1;"></div>
<span class="t" style="left:91px;top:775.5px;font-size:11.5px;font-weight:500;color:#333"><span class="r" style="transform:scaleX(0.9228);margin-right:-0.89px">押</span><span class="r" style="transform:scaleX(0.6897);margin-right:-3.57px">し</span><span class="r" style="transform:scaleX(0.9228);margin-right:-0.89px">出</span><span class="r" style="transform:scaleX(0.6897);margin-right:-3.57px">し</span><span class="r" style="transform:scaleX(0.9228);margin-right:-0.49px">2</span></span>
<svg class="abs" style="left:61px;top:776px;" width="17" height="16" viewBox="0 0 17 16" ><path d="M0 12.500H9.500L12.500 10V12.500L9.500 15.500H0Z" fill="#c2c2c2"/><path d="M0 3.500H9.500V12.500H0Z" fill="#6bb0e3"/><path d="M0 3.500L3 .5H12.500L9.500 3.500Z" fill="#8ccbf7"/><path d="M9.500 3.500L12.500 .5V10L9.500 12.500Z" fill="#4792cc"/><path d="M14.800 12V2" stroke="#222" stroke-width="1"/><path d="M14.800 0L13.300 3H16.300Z" fill="#222"/></svg>
<div class="abs" style="left:58px;top:798px;width:86px;height:20px;background:#f1f1f1;"></div>
<span class="t" style="left:91px;top:799.5px;font-size:11.5px;font-weight:500;color:#333"><span class="r" style="transform:scaleX(0.9228);margin-right:-0.89px">押</span><span class="r" style="transform:scaleX(0.6897);margin-right:-3.57px">し</span><span class="r" style="transform:scaleX(0.9228);margin-right:-0.89px">出</span><span class="r" style="transform:scaleX(0.6897);margin-right:-3.57px">し</span><span class="r" style="transform:scaleX(0.9228);margin-right:-0.49px">3</span></span>
<svg class="abs" style="left:61px;top:800px;" width="17" height="16" viewBox="0 0 17 16" ><path d="M0 12.500H9.500L12.500 10V12.500L9.500 15.500H0Z" fill="#c2c2c2"/><path d="M0 3.500H9.500V12.500H0Z" fill="#6bb0e3"/><path d="M0 3.500L3 .5H12.500L9.500 3.500Z" fill="#8ccbf7"/><path d="M9.500 3.500L12.500 .5V10L9.500 12.500Z" fill="#4792cc"/><path d="M14.800 12V2" stroke="#222" stroke-width="1"/><path d="M14.800 0L13.300 3H16.300Z" fill="#222"/></svg>
<div class="abs" style="left:58px;top:822px;width:86px;height:20px;background:#f1f1f1;"></div>
<span class="t" style="left:91px;top:823.5px;font-size:11.5px;font-weight:500;color:#333"><span class="r" style="transform:scaleX(0.9228);margin-right:-0.89px">押</span><span class="r" style="transform:scaleX(0.6897);margin-right:-3.57px">し</span><span class="r" style="transform:scaleX(0.9228);margin-right:-0.89px">出</span><span class="r" style="transform:scaleX(0.6897);margin-right:-3.57px">し</span><span class="r" style="transform:scaleX(0.9228);margin-right:-0.49px">7</span></span>
<svg class="abs" style="left:61px;top:824px;" width="17" height="16" viewBox="0 0 17 16" ><path d="M0 12.500H9.500L12.500 10V12.500L9.500 15.500H0Z" fill="#c2c2c2"/><path d="M0 3.500H9.500V12.500H0Z" fill="#6bb0e3"/><path d="M0 3.500L3 .5H12.500L9.500 3.500Z" fill="#8ccbf7"/><path d="M9.500 3.500L12.500 .5V10L9.500 12.500Z" fill="#4792cc"/><path d="M14.800 12V2" stroke="#222" stroke-width="1"/><path d="M14.800 0L13.300 3H16.300Z" fill="#222"/></svg>
<div class="abs" style="left:58px;top:846px;width:70px;height:20px;background:#f1f1f1;"></div>
<span class="t" style="left:91px;top:847.5px;font-size:11.5px;font-weight:500;color:#333;transform:scaleX(0.9182)">勾配8</span>
<svg class="abs" style="left:61px;top:848px;" width="16" height="15" viewBox="0 0 16 15" ><path d="M.7 14.500V7Q1 2.500 5.500 2L9 14.500Z" fill="#e1e1e1" stroke="#444" stroke-width="1" stroke-linejoin="round"/><path d="M5.500 4L10 1.500L14.500 11.500L9.500 14.300Z" fill="#6bb0e3"/><path d="M11.500 0L15.500 8.500" stroke="#333" stroke-width="1"/></svg>
<div class="abs" style="left:58px;top:870px;width:86px;height:20px;background:#f1f1f1;"></div>
<span class="t" style="left:91px;top:871.5px;font-size:11.5px;font-weight:500;color:#333"><span class="r" style="transform:scaleX(0.9228);margin-right:-0.89px">押</span><span class="r" style="transform:scaleX(0.6897);margin-right:-3.57px">し</span><span class="r" style="transform:scaleX(0.9228);margin-right:-0.89px">出</span><span class="r" style="transform:scaleX(0.6897);margin-right:-3.57px">し</span><span class="r" style="transform:scaleX(0.9228);margin-right:-0.49px">9</span></span>
<svg class="abs" style="left:61px;top:872px;" width="17" height="16" viewBox="0 0 17 16" ><path d="M0 12.500H9.500L12.500 10V12.500L9.500 15.500H0Z" fill="#c2c2c2"/><path d="M0 3.500H9.500V12.500H0Z" fill="#6bb0e3"/><path d="M0 3.500L3 .5H12.500L9.500 3.500Z" fill="#8ccbf7"/><path d="M9.500 3.500L12.500 .5V10L9.500 12.500Z" fill="#4792cc"/><path d="M14.800 12V2" stroke="#222" stroke-width="1"/><path d="M14.800 0L13.300 3H16.300Z" fill="#222"/></svg>
<div class="abs" style="left:58px;top:894px;width:78px;height:20px;background:#f1f1f1;"></div>
<span class="t" style="left:91px;top:895.5px;font-size:11.5px;font-weight:500;color:#333;transform:scaleX(0.9498)">勾配10</span>
<svg class="abs" style="left:61px;top:896px;" width="16" height="15" viewBox="0 0 16 15" ><path d="M.7 14.500V7Q1 2.500 5.500 2L9 14.500Z" fill="#e1e1e1" stroke="#444" stroke-width="1" stroke-linejoin="round"/><path d="M5.500 4L10 1.500L14.500 11.500L9.500 14.300Z" fill="#6bb0e3"/><path d="M11.500 0L15.500 8.500" stroke="#333" stroke-width="1"/></svg>
<div class="abs" style="left:58px;top:918px;width:90px;height:20px;background:#f1f1f1;"></div>
<span class="t" style="left:91px;top:919.5px;font-size:11.5px;font-weight:500;color:#333"><span class="r" style="transform:scaleX(0.9014);margin-right:-1.13px">押</span><span class="r" style="transform:scaleX(0.6737);margin-right:-3.75px">し</span><span class="r" style="transform:scaleX(0.9014);margin-right:-1.13px">出</span><span class="r" style="transform:scaleX(0.6737);margin-right:-3.75px">し</span><span class="r" style="transform:scaleX(0.9014);margin-right:-1.18px">11</span></span>
<svg class="abs" style="left:61px;top:920px;" width="17" height="16" viewBox="0 0 17 16" ><path d="M0 12.500H9.500L12.500 10V12.500L9.500 15.500H0Z" fill="#c2c2c2"/><path d="M0 3.500H9.500V12.500H0Z" fill="#6bb0e3"/><path d="M0 3.500L3 .5H12.500L9.500 3.500Z" fill="#8ccbf7"/><path d="M9.500 3.500L12.500 .5V10L9.500 12.500Z" fill="#4792cc"/><path d="M14.800 12V2" stroke="#222" stroke-width="1"/><path d="M14.800 0L13.300 3H16.300Z" fill="#222"/></svg>
<div class="abs" style="left:58px;top:942px;width:78px;height:20px;background:#f1f1f1;"></div>
<span class="t" style="left:91px;top:943.5px;font-size:11.5px;font-weight:500;color:#333;transform:scaleX(0.9498)">勾配12</span>
<svg class="abs" style="left:61px;top:944px;" width="16" height="15" viewBox="0 0 16 15" ><path d="M.7 14.500V7Q1 2.500 5.500 2L9 14.500Z" fill="#e1e1e1" stroke="#444" stroke-width="1" stroke-linejoin="round"/><path d="M5.500 4L10 1.500L14.500 11.500L9.500 14.300Z" fill="#6bb0e3"/><path d="M11.500 0L15.500 8.500" stroke="#333" stroke-width="1"/></svg>
<div class="abs" style="left:58px;top:966px;width:94px;height:20px;background:#f1f1f1;"></div>
<span class="t" style="left:91px;top:967.5px;font-size:11.5px;font-weight:500;color:#333"><span class="r" style="transform:scaleX(0.9436);margin-right:-0.65px">押</span><span class="r" style="transform:scaleX(0.7052);margin-right:-3.39px">し</span><span class="r" style="transform:scaleX(0.9436);margin-right:-0.65px">出</span><span class="r" style="transform:scaleX(0.7052);margin-right:-3.39px">し</span><span class="r" style="transform:scaleX(0.9436);margin-right:-0.72px">13</span></span>
<svg class="abs" style="left:61px;top:968px;" width="17" height="16" viewBox="0 0 17 16" ><path d="M0 12.500H9.500L12.500 10V12.500L9.500 15.500H0Z" fill="#c2c2c2"/><path d="M0 3.500H9.500V12.500H0Z" fill="#6bb0e3"/><path d="M0 3.500L3 .5H12.500L9.500 3.500Z" fill="#8ccbf7"/><path d="M9.500 3.500L12.500 .5V10L9.500 12.500Z" fill="#4792cc"/><path d="M14.800 12V2" stroke="#222" stroke-width="1"/><path d="M14.800 0L13.300 3H16.300Z" fill="#222"/></svg>
<div class="abs" style="left:4px;top:1011px;width:298px;height:23px;border:1px solid #c6c6c6;background:#f2f2f2"></div>
<span class="t" style="left:29px;top:1014.5px;font-size:11.5px;font-weight:500;color:#666;transform:scaleX(0.6739)">コメント</span>
<svg class="abs" style="left:282.5px;top:1018.5px;" width="10" height="10" viewBox="0 0 10 10" ><circle cx="5" cy="5" r="4.600" fill="#1c1c1c"/><path d="M2.200 5H7.800M5 2.200V7.800" stroke="#f2f2f2" stroke-width="1.400"/></svg>
<div class="abs" style="left:842px;top:1010px;width:237px;height:24px;background:#f2f2f2;"></div>
<svg class="abs" style="left:0;top:0;pointer-events:none" width="1928" height="1048" viewBox="0 0 1928 1048"><g fill="none" stroke="#222" stroke-width="1.100"><path d="M853.500 1015V1029" stroke-width="1.600"/><path d="M853.500 1013.500L851.300 1016.800H855.700Z" fill="#fff"/><ellipse cx="853.500" cy="1022.500" rx="6.800" ry="3.200"/><path d="M850 1027L846.500 1025.300L849.800 1023" fill="#222" stroke-width=".8"/></g><path d="M866 1020H871.500L868.750 1023.500Z" fill="#222"/><path d="M878.500 1019.500H893.500V1029.500H878.500Z" fill="#f4f4f4" stroke="#333" stroke-width="1.100"/><path d="M880.500 1019L884 1014.500L886 1016.500L889.500 1015V1019" fill="#ddd" stroke="#333" stroke-width=".9"/><rect x="881.500" y="1023" width="9" height="3.500" fill="#aab2c8" stroke="#333" stroke-width=".7"/><path d="M909 1029.500Q905.800 1026.500 904.800 1022L906.200 1021.200L907.500 1023.500V1016.500Q909 1014.500 910.500 1016.500V1015Q912 1013 913.500 1015V1015.500Q915 1013.500 916.500 1015.500V1017Q917.800 1015.500 919 1017.300V1023Q919 1027 916.500 1029.500Z" fill="#fff" stroke="#222" stroke-width=".9" stroke-linejoin="round"/><path d="M910.500 1016.500V1021M913.500 1015V1021M916.500 1015.500V1021" stroke="#222" stroke-width=".8" fill="none"/><circle cx="935" cy="1020.500" r="4.600" fill="#dfeef2" stroke="#333" stroke-width="1.200"/><path d="M938.500 1024L942.500 1028" stroke="#333" stroke-width="2.200"/><path d="M941.500 1015.500H945.500M943.500 1013.500V1017.500M941.500 1020.500H945.500" stroke="#222" stroke-width="1"/><rect x="956.500" y="1014.500" width="14.500" height="13" fill="none" stroke="#333" stroke-width=".9" stroke-dasharray="2 1.500"/><circle cx="963" cy="1020.500" r="6" fill="#dfeef2" stroke="#333" stroke-width="1.200"/><path d="M967.500 1025L971.500 1029" stroke="#333" stroke-width="2.200"/><path d="M977.500 1020H983L980.250 1023.500Z" fill="#222"/><rect x="989.500" y="1014.500" width="15" height="11" rx="1" fill="#dfe3ea" stroke="#333" stroke-width="1.100"/><rect x="991.500" y="1016.500" width="11" height="7" fill="#8aa9dc"/><path d="M994 1029H1000L999 1026H995Z" fill="#ccc" stroke="#555" stroke-width=".5"/><path d="M1007.500 1020H1013L1010.250 1023.500Z" fill="#222"/><rect x="1020.500" y="1014.500" width="15" height="14.500" fill="#e8e8ee" stroke="#333" stroke-width="1"/><path d="M1024.250 1014.500V1029M1028 1014.500V1029M1031.750 1014.500V1029M1020.500 1018.100H1035.500M1020.500 1021.700H1035.500M1020.500 1025.300H1035.500" stroke="#555" stroke-width=".9"/><path d="M1038.500 1020H1044L1041.250 1023.500Z" fill="#222"/><rect x="1051.500" y="1015.500" width="14" height="12" rx="1" fill="#a9bfe6" stroke="#2d4f9a" stroke-width="1.100"/><path d="M1058.500 1015.500V1027.500M1051.500 1021.500H1065.500" stroke="#2d4f9a" stroke-width="1.100"/><path d="M1069.500 1020H1075L1072.250 1023.500Z" fill="#222"/></svg>
<div class="abs" style="left:0px;top:1040px;width:1920px;height:8px;background:#111;"></div>
<div class="abs" style="left:1873px;top:1046px;width:10px;height:2px;background:#ddd;"></div>
<div class="abs" style="left:1886px;top:1046px;width:12px;height:2px;background:#ddd;"></div>
</body></html>
